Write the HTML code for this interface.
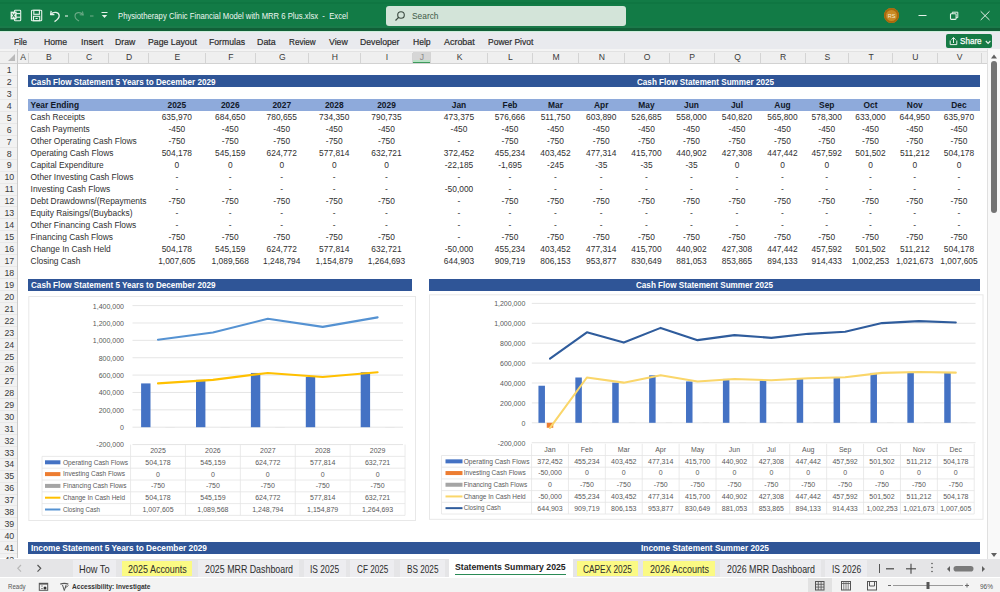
<!DOCTYPE html><html><head><meta charset="utf-8"><style>
html,body{margin:0;padding:0;width:1000px;height:592px;overflow:hidden;background:#fff;position:relative;font-family:"Liberation Sans",sans-serif;}
</style></head><body>
<div style="position:absolute;left:0.00px;top:0.00px;width:1000.00px;height:31.00px;background:#127b46;"></div>
<div style="position:absolute;top:11.52px;font-size:8.6px;line-height:1;white-space:nowrap;color:#eef7f1;font-weight:normal;left:117.50px;transform:scaleX(0.8951);transform-origin:0 0;">Physiotherapy Clinic Financial Model with MRR 6 Plus.xlsx&nbsp; -&nbsp; Excel</div>
<div style="position:absolute;left:0.00px;top:25.50px;width:1000.00px;height:0.80px;background:#0d7742;"></div>
<div style="position:absolute;left:0.00px;top:26.30px;width:1000.00px;height:2.00px;background:#1a7a4a;"></div>
<div style="position:absolute;left:0.00px;top:28.30px;width:1000.00px;height:2.70px;background:#115f37;"></div>
<div style="position:absolute;left:0.00px;top:2.00px;width:1000.00px;height:2.00px;background:#0f7642;"></div>
<div style="position:absolute;left:386.00px;top:5.50px;width:239.50px;height:20.30px;background:#d3e4d9;border-radius:3px;"></div>
<svg style="position:absolute;left:394px;top:10px" width="12" height="12" viewBox="0 0 12 12"><circle cx="7" cy="5" r="3.3" fill="none" stroke="#3b4a40" stroke-width="1.1"/><line x1="4.6" y1="7.4" x2="1.5" y2="10.5" stroke="#3b4a40" stroke-width="1.2"/></svg>
<div style="position:absolute;top:10.57px;font-size:9.6px;line-height:1;white-space:nowrap;color:#3e5a48;font-weight:normal;left:412.30px;transform:scaleX(0.8715);transform-origin:0 0;">Search</div>
<svg style="position:absolute;left:0;top:0" width="115" height="31" viewBox="0 0 115 31">
<g fill="none" stroke="#e6f2ea" stroke-width="1.1">
<rect x="14.5" y="10.3" width="6.2" height="10.4" rx="0.8"/>
<line x1="15" y1="13.6" x2="20.5" y2="13.6"/><line x1="15" y1="17.2" x2="20.5" y2="17.2"/>
<rect x="31.5" y="10.3" width="10.2" height="10.4" rx="0.8"/>
<rect x="33.8" y="10.3" width="5.6" height="4"/>
<rect x="33.5" y="16.3" width="6.2" height="4.4"/>
<line x1="35.5" y1="18.5" x2="37.7" y2="18.5"/>
<path d="M51.2 10.8 L50.6 14.6 L54.4 14.6" stroke-linejoin="round" stroke-width="1.3"/>
<path d="M50.9 14.3 C53.5 11.2 59.2 11.8 59.2 15.8 C59.2 18.2 57.5 19.8 54.5 21.6" stroke-width="1.3"/>
<line x1="65" y1="16" x2="68" y2="16"/>
</g>
<g fill="none" stroke="#6aa985" stroke-width="1.1">
<path d="M82.5 11.5 L83.2 15 L79.7 14.8"/>
<path d="M83 14.8 C80.5 11.5 75 12 75 16 C75 18.5 77 20 79 21"/>
<line x1="90" y1="16" x2="93.5" y2="16"/>
</g>
<line x1="101.5" y1="12.5" x2="107.5" y2="12.5" stroke="#e6f2ea" stroke-width="1"/>
<path d="M101.8 15 L107.2 15 L104.5 18 Z" fill="#e6f2ea"/>
<rect x="10.6" y="11.6" width="6" height="7.8" fill="#e6f2ea"/>
<path d="M12.3 13.4 L14.9 17.6 M14.9 13.4 L12.3 17.6" stroke="#1a7a44" stroke-width="1"/>
</svg>
<div style="position:absolute;left:884px;top:8.3px;width:15px;height:15px;border-radius:50%;background:#c98a24;box-shadow:inset 0 0 0 2px #a8680c;"></div>
<div style="position:absolute;top:13.54px;font-size:5.5px;line-height:1;white-space:nowrap;color:#f7ecd0;font-weight:normal;left:741.50px;width:300px;text-align:center;">RS</div>
<svg style="position:absolute;left:900px;top:0" width="100" height="31" viewBox="900 0 100 31">
<line x1="918.5" y1="15.5" x2="926.5" y2="15.5" stroke="#e6f2ea" stroke-width="1"/>
<rect x="950.5" y="13.8" width="5.6" height="5.6" rx="0.8" fill="none" stroke="#e6f2ea" stroke-width="1.1"/>
<path d="M952.3 13.8 L952.3 12.2 L957.8 12.2 L957.8 17.6 L956.1 17.6" fill="none" stroke="#e6f2ea" stroke-width="1"/>
<path d="M980.7 11.3 L989.5 20 M989.5 11.3 L980.7 20" stroke="#e6f2ea" stroke-width="1"/>
</svg>
<div style="position:absolute;left:0.00px;top:31.00px;width:1000.00px;height:17.60px;background:#e9eaee;"></div>
<div style="position:absolute;left:0.00px;top:31.00px;width:1000.00px;height:1.20px;background:#cdeedb;"></div>
<div style="position:absolute;top:37.27px;font-size:9.6px;line-height:1;white-space:nowrap;color:#2b2b2b;font-weight:normal;-webkit-text-stroke:0.2px #2b2b2b;left:14.00px;transform:scaleX(0.8404);transform-origin:0 0;">File</div>
<div style="position:absolute;top:37.27px;font-size:9.6px;line-height:1;white-space:nowrap;color:#2b2b2b;font-weight:normal;-webkit-text-stroke:0.2px #2b2b2b;left:43.80px;transform:scaleX(0.9065);transform-origin:0 0;">Home</div>
<div style="position:absolute;top:37.27px;font-size:9.6px;line-height:1;white-space:nowrap;color:#2b2b2b;font-weight:normal;-webkit-text-stroke:0.2px #2b2b2b;left:80.50px;transform:scaleX(0.9250);transform-origin:0 0;">Insert</div>
<div style="position:absolute;top:37.27px;font-size:9.6px;line-height:1;white-space:nowrap;color:#2b2b2b;font-weight:normal;-webkit-text-stroke:0.2px #2b2b2b;left:114.70px;transform:scaleX(0.9066);transform-origin:0 0;">Draw</div>
<div style="position:absolute;top:37.27px;font-size:9.6px;line-height:1;white-space:nowrap;color:#2b2b2b;font-weight:normal;-webkit-text-stroke:0.2px #2b2b2b;left:147.70px;transform:scaleX(0.9092);transform-origin:0 0;">Page Layout</div>
<div style="position:absolute;top:37.27px;font-size:9.6px;line-height:1;white-space:nowrap;color:#2b2b2b;font-weight:normal;-webkit-text-stroke:0.2px #2b2b2b;left:209.00px;transform:scaleX(0.9004);transform-origin:0 0;">Formulas</div>
<div style="position:absolute;top:37.27px;font-size:9.6px;line-height:1;white-space:nowrap;color:#2b2b2b;font-weight:normal;-webkit-text-stroke:0.2px #2b2b2b;left:257.00px;transform:scaleX(0.9227);transform-origin:0 0;">Data</div>
<div style="position:absolute;top:37.27px;font-size:9.6px;line-height:1;white-space:nowrap;color:#2b2b2b;font-weight:normal;-webkit-text-stroke:0.2px #2b2b2b;left:289.00px;transform:scaleX(0.8485);transform-origin:0 0;">Review</div>
<div style="position:absolute;top:37.27px;font-size:9.6px;line-height:1;white-space:nowrap;color:#2b2b2b;font-weight:normal;-webkit-text-stroke:0.2px #2b2b2b;left:328.80px;transform:scaleX(0.9115);transform-origin:0 0;">View</div>
<div style="position:absolute;top:37.27px;font-size:9.6px;line-height:1;white-space:nowrap;color:#2b2b2b;font-weight:normal;-webkit-text-stroke:0.2px #2b2b2b;left:360.20px;transform:scaleX(0.9032);transform-origin:0 0;">Developer</div>
<div style="position:absolute;top:37.27px;font-size:9.6px;line-height:1;white-space:nowrap;color:#2b2b2b;font-weight:normal;-webkit-text-stroke:0.2px #2b2b2b;left:412.90px;transform:scaleX(0.8918);transform-origin:0 0;">Help</div>
<div style="position:absolute;top:37.27px;font-size:9.6px;line-height:1;white-space:nowrap;color:#2b2b2b;font-weight:normal;-webkit-text-stroke:0.2px #2b2b2b;left:443.70px;transform:scaleX(0.9311);transform-origin:0 0;">Acrobat</div>
<div style="position:absolute;top:37.27px;font-size:9.6px;line-height:1;white-space:nowrap;color:#2b2b2b;font-weight:normal;-webkit-text-stroke:0.2px #2b2b2b;left:488.00px;transform:scaleX(0.8850);transform-origin:0 0;">Power Pivot</div>
<div style="position:absolute;left:946.30px;top:33.60px;width:45.90px;height:14.70px;background:#157a45;border-radius:2px;"></div>
<svg style="position:absolute;left:946px;top:33px" width="47" height="16" viewBox="946 33 47 16">
<path d="M950.2 40.5 L950.2 44.6 L956.8 44.6 L956.8 40.5" fill="none" stroke="#e6f2ea" stroke-width="1"/>
<path d="M953.5 43 L953.5 37.6 M951.4 39.7 L953.5 37.6 L955.6 39.7" fill="none" stroke="#e6f2ea" stroke-width="1"/>
<path d="M985.8 41 L988.1 43.3 L990.4 41" fill="none" stroke="#e6f2ea" stroke-width="1.2"/>
</svg>
<div style="position:absolute;top:37.15px;font-size:8.8px;line-height:1;white-space:nowrap;color:#ffffff;font-weight:normal;-webkit-text-stroke:0.25px #ffffff;left:960.40px;transform:scaleX(0.9198);transform-origin:0 0;">Share</div>
<div style="position:absolute;left:0.00px;top:48.60px;width:1000.00px;height:15.20px;background:#efefef;"></div>
<div style="position:absolute;left:0.00px;top:48.60px;width:987.30px;height:2.90px;background:#f4f4f4;"></div>
<div style="position:absolute;left:0.00px;top:51.30px;width:987.30px;height:0.60px;background:#e2e2e2;"></div>
<div style="position:absolute;left:0.00px;top:63.00px;width:987.30px;height:0.80px;background:#d2d2d2;"></div>
<svg style="position:absolute;left:7px;top:53px" width="9" height="9"><path d="M8 1 L8 8 L1 8 Z" fill="#b9b9b9"/></svg>
<div style="position:absolute;left:16.60px;top:49.00px;width:0.80px;height:509.00px;background:#c9c9c9;"></div>
<div style="position:absolute;left:412.50px;top:51.90px;width:18.00px;height:11.10px;background:#d6d6d6;"></div>
<div style="position:absolute;left:412.50px;top:60.00px;width:18.00px;height:1.60px;background:#b9e2c6;"></div>
<div style="position:absolute;left:412.50px;top:61.60px;width:18.00px;height:1.70px;background:#3d9a5c;"></div>
<div style="position:absolute;left:28.00px;top:52.50px;width:0.80px;height:10.50px;background:#d4d4d4;"></div>
<div style="position:absolute;top:53.02px;font-size:8.6px;line-height:1;white-space:nowrap;color:#3a3a3a;font-weight:normal;left:-126.80px;width:300px;text-align:center;">A</div>
<div style="position:absolute;left:68.10px;top:52.50px;width:0.80px;height:10.50px;background:#d4d4d4;"></div>
<div style="position:absolute;top:53.02px;font-size:8.6px;line-height:1;white-space:nowrap;color:#3a3a3a;font-weight:normal;left:-101.05px;width:300px;text-align:center;">B</div>
<div style="position:absolute;left:108.10px;top:52.50px;width:0.80px;height:10.50px;background:#d4d4d4;"></div>
<div style="position:absolute;top:53.02px;font-size:8.6px;line-height:1;white-space:nowrap;color:#3a3a3a;font-weight:normal;left:-61.00px;width:300px;text-align:center;">C</div>
<div style="position:absolute;left:148.30px;top:52.50px;width:0.80px;height:10.50px;background:#d4d4d4;"></div>
<div style="position:absolute;top:53.02px;font-size:8.6px;line-height:1;white-space:nowrap;color:#3a3a3a;font-weight:normal;left:-20.90px;width:300px;text-align:center;">D</div>
<div style="position:absolute;left:204.60px;top:52.50px;width:0.80px;height:10.50px;background:#d4d4d4;"></div>
<div style="position:absolute;top:53.02px;font-size:8.6px;line-height:1;white-space:nowrap;color:#3a3a3a;font-weight:normal;left:27.35px;width:300px;text-align:center;">E</div>
<div style="position:absolute;left:255.10px;top:52.50px;width:0.80px;height:10.50px;background:#d4d4d4;"></div>
<div style="position:absolute;top:53.02px;font-size:8.6px;line-height:1;white-space:nowrap;color:#3a3a3a;font-weight:normal;left:80.75px;width:300px;text-align:center;">F</div>
<div style="position:absolute;left:307.60px;top:52.50px;width:0.80px;height:10.50px;background:#d4d4d4;"></div>
<div style="position:absolute;top:53.02px;font-size:8.6px;line-height:1;white-space:nowrap;color:#3a3a3a;font-weight:normal;left:132.25px;width:300px;text-align:center;">G</div>
<div style="position:absolute;left:360.10px;top:52.50px;width:0.80px;height:10.50px;background:#d4d4d4;"></div>
<div style="position:absolute;top:53.02px;font-size:8.6px;line-height:1;white-space:nowrap;color:#3a3a3a;font-weight:normal;left:184.75px;width:300px;text-align:center;">H</div>
<div style="position:absolute;left:412.10px;top:52.50px;width:0.80px;height:10.50px;background:#d4d4d4;"></div>
<div style="position:absolute;top:53.02px;font-size:8.6px;line-height:1;white-space:nowrap;color:#3a3a3a;font-weight:normal;left:237.00px;width:300px;text-align:center;">I</div>
<div style="position:absolute;left:430.10px;top:52.50px;width:0.80px;height:10.50px;background:#d4d4d4;"></div>
<div style="position:absolute;top:53.02px;font-size:8.6px;line-height:1;white-space:nowrap;color:#8a8a8a;font-weight:normal;left:272.00px;width:300px;text-align:center;">J</div>
<div style="position:absolute;left:487.10px;top:52.50px;width:0.80px;height:10.50px;background:#d4d4d4;"></div>
<div style="position:absolute;top:53.02px;font-size:8.6px;line-height:1;white-space:nowrap;color:#3a3a3a;font-weight:normal;left:309.50px;width:300px;text-align:center;">K</div>
<div style="position:absolute;left:532.10px;top:52.50px;width:0.80px;height:10.50px;background:#d4d4d4;"></div>
<div style="position:absolute;top:53.02px;font-size:8.6px;line-height:1;white-space:nowrap;color:#3a3a3a;font-weight:normal;left:360.50px;width:300px;text-align:center;">L</div>
<div style="position:absolute;left:578.10px;top:52.50px;width:0.80px;height:10.50px;background:#d4d4d4;"></div>
<div style="position:absolute;top:53.02px;font-size:8.6px;line-height:1;white-space:nowrap;color:#3a3a3a;font-weight:normal;left:406.00px;width:300px;text-align:center;">M</div>
<div style="position:absolute;left:623.60px;top:52.50px;width:0.80px;height:10.50px;background:#d4d4d4;"></div>
<div style="position:absolute;top:53.02px;font-size:8.6px;line-height:1;white-space:nowrap;color:#3a3a3a;font-weight:normal;left:451.75px;width:300px;text-align:center;">N</div>
<div style="position:absolute;left:668.60px;top:52.50px;width:0.80px;height:10.50px;background:#d4d4d4;"></div>
<div style="position:absolute;top:53.02px;font-size:8.6px;line-height:1;white-space:nowrap;color:#3a3a3a;font-weight:normal;left:497.00px;width:300px;text-align:center;">O</div>
<div style="position:absolute;left:713.60px;top:52.50px;width:0.80px;height:10.50px;background:#d4d4d4;"></div>
<div style="position:absolute;top:53.02px;font-size:8.6px;line-height:1;white-space:nowrap;color:#3a3a3a;font-weight:normal;left:542.00px;width:300px;text-align:center;">P</div>
<div style="position:absolute;left:759.60px;top:52.50px;width:0.80px;height:10.50px;background:#d4d4d4;"></div>
<div style="position:absolute;top:53.02px;font-size:8.6px;line-height:1;white-space:nowrap;color:#3a3a3a;font-weight:normal;left:587.50px;width:300px;text-align:center;">Q</div>
<div style="position:absolute;left:804.60px;top:52.50px;width:0.80px;height:10.50px;background:#d4d4d4;"></div>
<div style="position:absolute;top:53.02px;font-size:8.6px;line-height:1;white-space:nowrap;color:#3a3a3a;font-weight:normal;left:633.00px;width:300px;text-align:center;">R</div>
<div style="position:absolute;left:848.10px;top:52.50px;width:0.80px;height:10.50px;background:#d4d4d4;"></div>
<div style="position:absolute;top:53.02px;font-size:8.6px;line-height:1;white-space:nowrap;color:#3a3a3a;font-weight:normal;left:677.25px;width:300px;text-align:center;">S</div>
<div style="position:absolute;left:892.10px;top:52.50px;width:0.80px;height:10.50px;background:#d4d4d4;"></div>
<div style="position:absolute;top:53.02px;font-size:8.6px;line-height:1;white-space:nowrap;color:#3a3a3a;font-weight:normal;left:721.00px;width:300px;text-align:center;">T</div>
<div style="position:absolute;left:936.60px;top:52.50px;width:0.80px;height:10.50px;background:#d4d4d4;"></div>
<div style="position:absolute;top:53.02px;font-size:8.6px;line-height:1;white-space:nowrap;color:#3a3a3a;font-weight:normal;left:765.25px;width:300px;text-align:center;">U</div>
<div style="position:absolute;left:980.60px;top:52.50px;width:0.80px;height:10.50px;background:#d4d4d4;"></div>
<div style="position:absolute;top:53.02px;font-size:8.6px;line-height:1;white-space:nowrap;color:#3a3a3a;font-weight:normal;left:809.50px;width:300px;text-align:center;">V</div>
<div style="position:absolute;left:0.00px;top:63.80px;width:17.00px;height:494.20px;background:#f2f2f2;"></div>
<div style="position:absolute;left:0.00px;top:74.91px;width:17.00px;height:0.80px;background:#e8e8e8;"></div>
<div style="position:absolute;top:65.80px;font-size:8.8px;line-height:1;white-space:nowrap;color:#3a3a3a;font-weight:normal;left:-140.70px;width:300px;text-align:center;">1</div>
<div style="position:absolute;left:0.00px;top:86.87px;width:17.00px;height:0.80px;background:#e8e8e8;"></div>
<div style="position:absolute;top:77.76px;font-size:8.8px;line-height:1;white-space:nowrap;color:#3a3a3a;font-weight:normal;left:-140.70px;width:300px;text-align:center;">2</div>
<div style="position:absolute;left:0.00px;top:98.83px;width:17.00px;height:0.80px;background:#e8e8e8;"></div>
<div style="position:absolute;top:89.72px;font-size:8.8px;line-height:1;white-space:nowrap;color:#3a3a3a;font-weight:normal;left:-140.70px;width:300px;text-align:center;">3</div>
<div style="position:absolute;left:0.00px;top:110.79px;width:17.00px;height:0.80px;background:#e8e8e8;"></div>
<div style="position:absolute;top:101.68px;font-size:8.8px;line-height:1;white-space:nowrap;color:#3a3a3a;font-weight:normal;left:-140.70px;width:300px;text-align:center;">4</div>
<div style="position:absolute;left:0.00px;top:122.75px;width:17.00px;height:0.80px;background:#e8e8e8;"></div>
<div style="position:absolute;top:113.64px;font-size:8.8px;line-height:1;white-space:nowrap;color:#3a3a3a;font-weight:normal;left:-140.70px;width:300px;text-align:center;">5</div>
<div style="position:absolute;left:0.00px;top:134.71px;width:17.00px;height:0.80px;background:#e8e8e8;"></div>
<div style="position:absolute;top:125.60px;font-size:8.8px;line-height:1;white-space:nowrap;color:#3a3a3a;font-weight:normal;left:-140.70px;width:300px;text-align:center;">6</div>
<div style="position:absolute;left:0.00px;top:146.67px;width:17.00px;height:0.80px;background:#e8e8e8;"></div>
<div style="position:absolute;top:137.56px;font-size:8.8px;line-height:1;white-space:nowrap;color:#3a3a3a;font-weight:normal;left:-140.70px;width:300px;text-align:center;">7</div>
<div style="position:absolute;left:0.00px;top:158.63px;width:17.00px;height:0.80px;background:#e8e8e8;"></div>
<div style="position:absolute;top:149.52px;font-size:8.8px;line-height:1;white-space:nowrap;color:#3a3a3a;font-weight:normal;left:-140.70px;width:300px;text-align:center;">8</div>
<div style="position:absolute;left:0.00px;top:170.59px;width:17.00px;height:0.80px;background:#e8e8e8;"></div>
<div style="position:absolute;top:161.48px;font-size:8.8px;line-height:1;white-space:nowrap;color:#3a3a3a;font-weight:normal;left:-140.70px;width:300px;text-align:center;">9</div>
<div style="position:absolute;left:0.00px;top:182.55px;width:17.00px;height:0.80px;background:#e8e8e8;"></div>
<div style="position:absolute;top:173.44px;font-size:8.8px;line-height:1;white-space:nowrap;color:#3a3a3a;font-weight:normal;left:-140.70px;width:300px;text-align:center;">10</div>
<div style="position:absolute;left:0.00px;top:194.51px;width:17.00px;height:0.80px;background:#e8e8e8;"></div>
<div style="position:absolute;top:185.40px;font-size:8.8px;line-height:1;white-space:nowrap;color:#3a3a3a;font-weight:normal;left:-140.70px;width:300px;text-align:center;">11</div>
<div style="position:absolute;left:0.00px;top:206.47px;width:17.00px;height:0.80px;background:#e8e8e8;"></div>
<div style="position:absolute;top:197.36px;font-size:8.8px;line-height:1;white-space:nowrap;color:#3a3a3a;font-weight:normal;left:-140.70px;width:300px;text-align:center;">12</div>
<div style="position:absolute;left:0.00px;top:218.43px;width:17.00px;height:0.80px;background:#e8e8e8;"></div>
<div style="position:absolute;top:209.32px;font-size:8.8px;line-height:1;white-space:nowrap;color:#3a3a3a;font-weight:normal;left:-140.70px;width:300px;text-align:center;">13</div>
<div style="position:absolute;left:0.00px;top:230.39px;width:17.00px;height:0.80px;background:#e8e8e8;"></div>
<div style="position:absolute;top:221.28px;font-size:8.8px;line-height:1;white-space:nowrap;color:#3a3a3a;font-weight:normal;left:-140.70px;width:300px;text-align:center;">14</div>
<div style="position:absolute;left:0.00px;top:242.35px;width:17.00px;height:0.80px;background:#e8e8e8;"></div>
<div style="position:absolute;top:233.24px;font-size:8.8px;line-height:1;white-space:nowrap;color:#3a3a3a;font-weight:normal;left:-140.70px;width:300px;text-align:center;">15</div>
<div style="position:absolute;left:0.00px;top:254.31px;width:17.00px;height:0.80px;background:#e8e8e8;"></div>
<div style="position:absolute;top:245.20px;font-size:8.8px;line-height:1;white-space:nowrap;color:#3a3a3a;font-weight:normal;left:-140.70px;width:300px;text-align:center;">16</div>
<div style="position:absolute;left:0.00px;top:266.27px;width:17.00px;height:0.80px;background:#e8e8e8;"></div>
<div style="position:absolute;top:257.16px;font-size:8.8px;line-height:1;white-space:nowrap;color:#3a3a3a;font-weight:normal;left:-140.70px;width:300px;text-align:center;">17</div>
<div style="position:absolute;left:0.00px;top:278.23px;width:17.00px;height:0.80px;background:#e8e8e8;"></div>
<div style="position:absolute;top:269.12px;font-size:8.8px;line-height:1;white-space:nowrap;color:#3a3a3a;font-weight:normal;left:-140.70px;width:300px;text-align:center;">18</div>
<div style="position:absolute;left:0.00px;top:290.19px;width:17.00px;height:0.80px;background:#e8e8e8;"></div>
<div style="position:absolute;top:281.08px;font-size:8.8px;line-height:1;white-space:nowrap;color:#3a3a3a;font-weight:normal;left:-140.70px;width:300px;text-align:center;">19</div>
<div style="position:absolute;left:0.00px;top:302.15px;width:17.00px;height:0.80px;background:#e8e8e8;"></div>
<div style="position:absolute;top:293.04px;font-size:8.8px;line-height:1;white-space:nowrap;color:#3a3a3a;font-weight:normal;left:-140.70px;width:300px;text-align:center;">20</div>
<div style="position:absolute;left:0.00px;top:314.11px;width:17.00px;height:0.80px;background:#e8e8e8;"></div>
<div style="position:absolute;top:305.00px;font-size:8.8px;line-height:1;white-space:nowrap;color:#3a3a3a;font-weight:normal;left:-140.70px;width:300px;text-align:center;">21</div>
<div style="position:absolute;left:0.00px;top:326.07px;width:17.00px;height:0.80px;background:#e8e8e8;"></div>
<div style="position:absolute;top:316.96px;font-size:8.8px;line-height:1;white-space:nowrap;color:#3a3a3a;font-weight:normal;left:-140.70px;width:300px;text-align:center;">22</div>
<div style="position:absolute;left:0.00px;top:338.03px;width:17.00px;height:0.80px;background:#e8e8e8;"></div>
<div style="position:absolute;top:328.92px;font-size:8.8px;line-height:1;white-space:nowrap;color:#3a3a3a;font-weight:normal;left:-140.70px;width:300px;text-align:center;">23</div>
<div style="position:absolute;left:0.00px;top:349.99px;width:17.00px;height:0.80px;background:#e8e8e8;"></div>
<div style="position:absolute;top:340.88px;font-size:8.8px;line-height:1;white-space:nowrap;color:#3a3a3a;font-weight:normal;left:-140.70px;width:300px;text-align:center;">24</div>
<div style="position:absolute;left:0.00px;top:361.95px;width:17.00px;height:0.80px;background:#e8e8e8;"></div>
<div style="position:absolute;top:352.84px;font-size:8.8px;line-height:1;white-space:nowrap;color:#3a3a3a;font-weight:normal;left:-140.70px;width:300px;text-align:center;">25</div>
<div style="position:absolute;left:0.00px;top:373.91px;width:17.00px;height:0.80px;background:#e8e8e8;"></div>
<div style="position:absolute;top:364.80px;font-size:8.8px;line-height:1;white-space:nowrap;color:#3a3a3a;font-weight:normal;left:-140.70px;width:300px;text-align:center;">26</div>
<div style="position:absolute;left:0.00px;top:385.87px;width:17.00px;height:0.80px;background:#e8e8e8;"></div>
<div style="position:absolute;top:376.76px;font-size:8.8px;line-height:1;white-space:nowrap;color:#3a3a3a;font-weight:normal;left:-140.70px;width:300px;text-align:center;">27</div>
<div style="position:absolute;left:0.00px;top:397.83px;width:17.00px;height:0.80px;background:#e8e8e8;"></div>
<div style="position:absolute;top:388.72px;font-size:8.8px;line-height:1;white-space:nowrap;color:#3a3a3a;font-weight:normal;left:-140.70px;width:300px;text-align:center;">28</div>
<div style="position:absolute;left:0.00px;top:409.79px;width:17.00px;height:0.80px;background:#e8e8e8;"></div>
<div style="position:absolute;top:400.68px;font-size:8.8px;line-height:1;white-space:nowrap;color:#3a3a3a;font-weight:normal;left:-140.70px;width:300px;text-align:center;">29</div>
<div style="position:absolute;left:0.00px;top:421.75px;width:17.00px;height:0.80px;background:#e8e8e8;"></div>
<div style="position:absolute;top:412.64px;font-size:8.8px;line-height:1;white-space:nowrap;color:#3a3a3a;font-weight:normal;left:-140.70px;width:300px;text-align:center;">30</div>
<div style="position:absolute;left:0.00px;top:433.71px;width:17.00px;height:0.80px;background:#e8e8e8;"></div>
<div style="position:absolute;top:424.60px;font-size:8.8px;line-height:1;white-space:nowrap;color:#3a3a3a;font-weight:normal;left:-140.70px;width:300px;text-align:center;">31</div>
<div style="position:absolute;left:0.00px;top:445.67px;width:17.00px;height:0.80px;background:#e8e8e8;"></div>
<div style="position:absolute;top:436.56px;font-size:8.8px;line-height:1;white-space:nowrap;color:#3a3a3a;font-weight:normal;left:-140.70px;width:300px;text-align:center;">32</div>
<div style="position:absolute;left:0.00px;top:457.63px;width:17.00px;height:0.80px;background:#e8e8e8;"></div>
<div style="position:absolute;top:448.52px;font-size:8.8px;line-height:1;white-space:nowrap;color:#3a3a3a;font-weight:normal;left:-140.70px;width:300px;text-align:center;">33</div>
<div style="position:absolute;left:0.00px;top:469.59px;width:17.00px;height:0.80px;background:#e8e8e8;"></div>
<div style="position:absolute;top:460.48px;font-size:8.8px;line-height:1;white-space:nowrap;color:#3a3a3a;font-weight:normal;left:-140.70px;width:300px;text-align:center;">34</div>
<div style="position:absolute;left:0.00px;top:481.55px;width:17.00px;height:0.80px;background:#e8e8e8;"></div>
<div style="position:absolute;top:472.44px;font-size:8.8px;line-height:1;white-space:nowrap;color:#3a3a3a;font-weight:normal;left:-140.70px;width:300px;text-align:center;">35</div>
<div style="position:absolute;left:0.00px;top:493.51px;width:17.00px;height:0.80px;background:#e8e8e8;"></div>
<div style="position:absolute;top:484.40px;font-size:8.8px;line-height:1;white-space:nowrap;color:#3a3a3a;font-weight:normal;left:-140.70px;width:300px;text-align:center;">36</div>
<div style="position:absolute;left:0.00px;top:505.47px;width:17.00px;height:0.80px;background:#e8e8e8;"></div>
<div style="position:absolute;top:496.36px;font-size:8.8px;line-height:1;white-space:nowrap;color:#3a3a3a;font-weight:normal;left:-140.70px;width:300px;text-align:center;">37</div>
<div style="position:absolute;left:0.00px;top:517.43px;width:17.00px;height:0.80px;background:#e8e8e8;"></div>
<div style="position:absolute;top:508.32px;font-size:8.8px;line-height:1;white-space:nowrap;color:#3a3a3a;font-weight:normal;left:-140.70px;width:300px;text-align:center;">38</div>
<div style="position:absolute;left:0.00px;top:529.39px;width:17.00px;height:0.80px;background:#e8e8e8;"></div>
<div style="position:absolute;top:520.28px;font-size:8.8px;line-height:1;white-space:nowrap;color:#3a3a3a;font-weight:normal;left:-140.70px;width:300px;text-align:center;">39</div>
<div style="position:absolute;left:0.00px;top:541.35px;width:17.00px;height:0.80px;background:#e8e8e8;"></div>
<div style="position:absolute;top:532.24px;font-size:8.8px;line-height:1;white-space:nowrap;color:#3a3a3a;font-weight:normal;left:-140.70px;width:300px;text-align:center;">40</div>
<div style="position:absolute;left:0.00px;top:553.31px;width:17.00px;height:0.80px;background:#e8e8e8;"></div>
<div style="position:absolute;top:544.20px;font-size:8.8px;line-height:1;white-space:nowrap;color:#3a3a3a;font-weight:normal;left:-140.70px;width:300px;text-align:center;">41</div>
<div style="position:absolute;left:0.00px;top:565.27px;width:17.00px;height:0.80px;background:#e8e8e8;"></div>
<div style="position:absolute;top:556.16px;font-size:8.8px;line-height:1;white-space:nowrap;color:#3a3a3a;font-weight:normal;left:-140.70px;width:300px;text-align:center;">42</div>
<div style="position:absolute;left:28.40px;top:75.31px;width:951.60px;height:11.96px;background:#2f5597;"></div>
<div style="position:absolute;top:77.55px;font-size:8.7px;line-height:1;white-space:nowrap;color:#ffffff;font-weight:bold;left:30.60px;transform:scaleX(0.9350);transform-origin:0 0;">Cash Flow Statement 5 Years to December 2029</div>
<div style="position:absolute;top:77.55px;font-size:8.7px;line-height:1;white-space:nowrap;color:#ffffff;font-weight:bold;left:637.25px;transform:scaleX(0.9334);transform-origin:0 0;">Cash Flow Statement Summer 2025</div>
<div style="position:absolute;left:28.40px;top:99.23px;width:951.60px;height:11.96px;background:#8eaadb;"></div>
<div style="position:absolute;top:101.02px;font-size:8.4px;line-height:1;white-space:nowrap;color:#111827;font-weight:bold;left:30.60px;">Year Ending</div>
<div style="position:absolute;top:101.02px;font-size:8.4px;line-height:1;white-space:nowrap;color:#111827;font-weight:bold;left:26.85px;width:300px;text-align:center;">2025</div>
<div style="position:absolute;top:101.02px;font-size:8.4px;line-height:1;white-space:nowrap;color:#111827;font-weight:bold;left:80.25px;width:300px;text-align:center;">2026</div>
<div style="position:absolute;top:101.02px;font-size:8.4px;line-height:1;white-space:nowrap;color:#111827;font-weight:bold;left:131.75px;width:300px;text-align:center;">2027</div>
<div style="position:absolute;top:101.02px;font-size:8.4px;line-height:1;white-space:nowrap;color:#111827;font-weight:bold;left:184.25px;width:300px;text-align:center;">2028</div>
<div style="position:absolute;top:101.02px;font-size:8.4px;line-height:1;white-space:nowrap;color:#111827;font-weight:bold;left:236.50px;width:300px;text-align:center;">2029</div>
<div style="position:absolute;top:101.02px;font-size:8.4px;line-height:1;white-space:nowrap;color:#111827;font-weight:bold;left:309.00px;width:300px;text-align:center;">Jan</div>
<div style="position:absolute;top:101.02px;font-size:8.4px;line-height:1;white-space:nowrap;color:#111827;font-weight:bold;left:360.00px;width:300px;text-align:center;">Feb</div>
<div style="position:absolute;top:101.02px;font-size:8.4px;line-height:1;white-space:nowrap;color:#111827;font-weight:bold;left:405.50px;width:300px;text-align:center;">Mar</div>
<div style="position:absolute;top:101.02px;font-size:8.4px;line-height:1;white-space:nowrap;color:#111827;font-weight:bold;left:451.25px;width:300px;text-align:center;">Apr</div>
<div style="position:absolute;top:101.02px;font-size:8.4px;line-height:1;white-space:nowrap;color:#111827;font-weight:bold;left:496.50px;width:300px;text-align:center;">May</div>
<div style="position:absolute;top:101.02px;font-size:8.4px;line-height:1;white-space:nowrap;color:#111827;font-weight:bold;left:541.50px;width:300px;text-align:center;">Jun</div>
<div style="position:absolute;top:101.02px;font-size:8.4px;line-height:1;white-space:nowrap;color:#111827;font-weight:bold;left:587.00px;width:300px;text-align:center;">Jul</div>
<div style="position:absolute;top:101.02px;font-size:8.4px;line-height:1;white-space:nowrap;color:#111827;font-weight:bold;left:632.50px;width:300px;text-align:center;">Aug</div>
<div style="position:absolute;top:101.02px;font-size:8.4px;line-height:1;white-space:nowrap;color:#111827;font-weight:bold;left:676.75px;width:300px;text-align:center;">Sep</div>
<div style="position:absolute;top:101.02px;font-size:8.4px;line-height:1;white-space:nowrap;color:#111827;font-weight:bold;left:720.50px;width:300px;text-align:center;">Oct</div>
<div style="position:absolute;top:101.02px;font-size:8.4px;line-height:1;white-space:nowrap;color:#111827;font-weight:bold;left:764.75px;width:300px;text-align:center;">Nov</div>
<div style="position:absolute;top:101.02px;font-size:8.4px;line-height:1;white-space:nowrap;color:#111827;font-weight:bold;left:809.00px;width:300px;text-align:center;">Dec</div>
<div style="position:absolute;top:112.98px;font-size:8.4px;line-height:1;white-space:nowrap;color:#303030;font-weight:normal;left:30.60px;">Cash Receipts</div>
<div style="position:absolute;top:112.98px;font-size:8.4px;line-height:1;white-space:nowrap;color:#303030;font-weight:normal;left:26.85px;width:300px;text-align:center;">635,970</div>
<div style="position:absolute;top:112.98px;font-size:8.4px;line-height:1;white-space:nowrap;color:#303030;font-weight:normal;left:80.25px;width:300px;text-align:center;">684,650</div>
<div style="position:absolute;top:112.98px;font-size:8.4px;line-height:1;white-space:nowrap;color:#303030;font-weight:normal;left:131.75px;width:300px;text-align:center;">780,655</div>
<div style="position:absolute;top:112.98px;font-size:8.4px;line-height:1;white-space:nowrap;color:#303030;font-weight:normal;left:184.25px;width:300px;text-align:center;">734,350</div>
<div style="position:absolute;top:112.98px;font-size:8.4px;line-height:1;white-space:nowrap;color:#303030;font-weight:normal;left:236.50px;width:300px;text-align:center;">790,735</div>
<div style="position:absolute;top:112.98px;font-size:8.4px;line-height:1;white-space:nowrap;color:#303030;font-weight:normal;left:309.00px;width:300px;text-align:center;">473,375</div>
<div style="position:absolute;top:112.98px;font-size:8.4px;line-height:1;white-space:nowrap;color:#303030;font-weight:normal;left:360.00px;width:300px;text-align:center;">576,666</div>
<div style="position:absolute;top:112.98px;font-size:8.4px;line-height:1;white-space:nowrap;color:#303030;font-weight:normal;left:405.50px;width:300px;text-align:center;">511,750</div>
<div style="position:absolute;top:112.98px;font-size:8.4px;line-height:1;white-space:nowrap;color:#303030;font-weight:normal;left:451.25px;width:300px;text-align:center;">603,890</div>
<div style="position:absolute;top:112.98px;font-size:8.4px;line-height:1;white-space:nowrap;color:#303030;font-weight:normal;left:496.50px;width:300px;text-align:center;">526,685</div>
<div style="position:absolute;top:112.98px;font-size:8.4px;line-height:1;white-space:nowrap;color:#303030;font-weight:normal;left:541.50px;width:300px;text-align:center;">558,000</div>
<div style="position:absolute;top:112.98px;font-size:8.4px;line-height:1;white-space:nowrap;color:#303030;font-weight:normal;left:587.00px;width:300px;text-align:center;">540,820</div>
<div style="position:absolute;top:112.98px;font-size:8.4px;line-height:1;white-space:nowrap;color:#303030;font-weight:normal;left:632.50px;width:300px;text-align:center;">565,800</div>
<div style="position:absolute;top:112.98px;font-size:8.4px;line-height:1;white-space:nowrap;color:#303030;font-weight:normal;left:676.75px;width:300px;text-align:center;">578,300</div>
<div style="position:absolute;top:112.98px;font-size:8.4px;line-height:1;white-space:nowrap;color:#303030;font-weight:normal;left:720.50px;width:300px;text-align:center;">633,000</div>
<div style="position:absolute;top:112.98px;font-size:8.4px;line-height:1;white-space:nowrap;color:#303030;font-weight:normal;left:764.75px;width:300px;text-align:center;">644,950</div>
<div style="position:absolute;top:112.98px;font-size:8.4px;line-height:1;white-space:nowrap;color:#303030;font-weight:normal;left:809.00px;width:300px;text-align:center;">635,970</div>
<div style="position:absolute;top:124.94px;font-size:8.4px;line-height:1;white-space:nowrap;color:#303030;font-weight:normal;left:30.60px;">Cash Payments</div>
<div style="position:absolute;top:124.94px;font-size:8.4px;line-height:1;white-space:nowrap;color:#303030;font-weight:normal;left:26.85px;width:300px;text-align:center;">-450</div>
<div style="position:absolute;top:124.94px;font-size:8.4px;line-height:1;white-space:nowrap;color:#303030;font-weight:normal;left:80.25px;width:300px;text-align:center;">-450</div>
<div style="position:absolute;top:124.94px;font-size:8.4px;line-height:1;white-space:nowrap;color:#303030;font-weight:normal;left:131.75px;width:300px;text-align:center;">-450</div>
<div style="position:absolute;top:124.94px;font-size:8.4px;line-height:1;white-space:nowrap;color:#303030;font-weight:normal;left:184.25px;width:300px;text-align:center;">-450</div>
<div style="position:absolute;top:124.94px;font-size:8.4px;line-height:1;white-space:nowrap;color:#303030;font-weight:normal;left:236.50px;width:300px;text-align:center;">-450</div>
<div style="position:absolute;top:124.94px;font-size:8.4px;line-height:1;white-space:nowrap;color:#303030;font-weight:normal;left:309.00px;width:300px;text-align:center;">-450</div>
<div style="position:absolute;top:124.94px;font-size:8.4px;line-height:1;white-space:nowrap;color:#303030;font-weight:normal;left:360.00px;width:300px;text-align:center;">-450</div>
<div style="position:absolute;top:124.94px;font-size:8.4px;line-height:1;white-space:nowrap;color:#303030;font-weight:normal;left:405.50px;width:300px;text-align:center;">-450</div>
<div style="position:absolute;top:124.94px;font-size:8.4px;line-height:1;white-space:nowrap;color:#303030;font-weight:normal;left:451.25px;width:300px;text-align:center;">-450</div>
<div style="position:absolute;top:124.94px;font-size:8.4px;line-height:1;white-space:nowrap;color:#303030;font-weight:normal;left:496.50px;width:300px;text-align:center;">-450</div>
<div style="position:absolute;top:124.94px;font-size:8.4px;line-height:1;white-space:nowrap;color:#303030;font-weight:normal;left:541.50px;width:300px;text-align:center;">-450</div>
<div style="position:absolute;top:124.94px;font-size:8.4px;line-height:1;white-space:nowrap;color:#303030;font-weight:normal;left:587.00px;width:300px;text-align:center;">-450</div>
<div style="position:absolute;top:124.94px;font-size:8.4px;line-height:1;white-space:nowrap;color:#303030;font-weight:normal;left:632.50px;width:300px;text-align:center;">-450</div>
<div style="position:absolute;top:124.94px;font-size:8.4px;line-height:1;white-space:nowrap;color:#303030;font-weight:normal;left:676.75px;width:300px;text-align:center;">-450</div>
<div style="position:absolute;top:124.94px;font-size:8.4px;line-height:1;white-space:nowrap;color:#303030;font-weight:normal;left:720.50px;width:300px;text-align:center;">-450</div>
<div style="position:absolute;top:124.94px;font-size:8.4px;line-height:1;white-space:nowrap;color:#303030;font-weight:normal;left:764.75px;width:300px;text-align:center;">-450</div>
<div style="position:absolute;top:124.94px;font-size:8.4px;line-height:1;white-space:nowrap;color:#303030;font-weight:normal;left:809.00px;width:300px;text-align:center;">-450</div>
<div style="position:absolute;top:136.90px;font-size:8.4px;line-height:1;white-space:nowrap;color:#303030;font-weight:normal;left:30.60px;">Other Operating Cash Flows</div>
<div style="position:absolute;top:136.90px;font-size:8.4px;line-height:1;white-space:nowrap;color:#303030;font-weight:normal;left:26.85px;width:300px;text-align:center;">-750</div>
<div style="position:absolute;top:136.90px;font-size:8.4px;line-height:1;white-space:nowrap;color:#303030;font-weight:normal;left:80.25px;width:300px;text-align:center;">-750</div>
<div style="position:absolute;top:136.90px;font-size:8.4px;line-height:1;white-space:nowrap;color:#303030;font-weight:normal;left:131.75px;width:300px;text-align:center;">-750</div>
<div style="position:absolute;top:136.90px;font-size:8.4px;line-height:1;white-space:nowrap;color:#303030;font-weight:normal;left:184.25px;width:300px;text-align:center;">-750</div>
<div style="position:absolute;top:136.90px;font-size:8.4px;line-height:1;white-space:nowrap;color:#303030;font-weight:normal;left:236.50px;width:300px;text-align:center;">-750</div>
<div style="position:absolute;top:136.90px;font-size:8.4px;line-height:1;white-space:nowrap;color:#303030;font-weight:normal;left:309.00px;width:300px;text-align:center;">-</div>
<div style="position:absolute;top:136.90px;font-size:8.4px;line-height:1;white-space:nowrap;color:#303030;font-weight:normal;left:360.00px;width:300px;text-align:center;">-750</div>
<div style="position:absolute;top:136.90px;font-size:8.4px;line-height:1;white-space:nowrap;color:#303030;font-weight:normal;left:405.50px;width:300px;text-align:center;">-750</div>
<div style="position:absolute;top:136.90px;font-size:8.4px;line-height:1;white-space:nowrap;color:#303030;font-weight:normal;left:451.25px;width:300px;text-align:center;">-750</div>
<div style="position:absolute;top:136.90px;font-size:8.4px;line-height:1;white-space:nowrap;color:#303030;font-weight:normal;left:496.50px;width:300px;text-align:center;">-750</div>
<div style="position:absolute;top:136.90px;font-size:8.4px;line-height:1;white-space:nowrap;color:#303030;font-weight:normal;left:541.50px;width:300px;text-align:center;">-750</div>
<div style="position:absolute;top:136.90px;font-size:8.4px;line-height:1;white-space:nowrap;color:#303030;font-weight:normal;left:587.00px;width:300px;text-align:center;">-750</div>
<div style="position:absolute;top:136.90px;font-size:8.4px;line-height:1;white-space:nowrap;color:#303030;font-weight:normal;left:632.50px;width:300px;text-align:center;">-750</div>
<div style="position:absolute;top:136.90px;font-size:8.4px;line-height:1;white-space:nowrap;color:#303030;font-weight:normal;left:676.75px;width:300px;text-align:center;">-750</div>
<div style="position:absolute;top:136.90px;font-size:8.4px;line-height:1;white-space:nowrap;color:#303030;font-weight:normal;left:720.50px;width:300px;text-align:center;">-750</div>
<div style="position:absolute;top:136.90px;font-size:8.4px;line-height:1;white-space:nowrap;color:#303030;font-weight:normal;left:764.75px;width:300px;text-align:center;">-750</div>
<div style="position:absolute;top:136.90px;font-size:8.4px;line-height:1;white-space:nowrap;color:#303030;font-weight:normal;left:809.00px;width:300px;text-align:center;">-750</div>
<div style="position:absolute;top:148.86px;font-size:8.4px;line-height:1;white-space:nowrap;color:#303030;font-weight:normal;left:30.60px;">Operating Cash Flows</div>
<div style="position:absolute;top:148.86px;font-size:8.4px;line-height:1;white-space:nowrap;color:#303030;font-weight:normal;left:26.85px;width:300px;text-align:center;">504,178</div>
<div style="position:absolute;top:148.86px;font-size:8.4px;line-height:1;white-space:nowrap;color:#303030;font-weight:normal;left:80.25px;width:300px;text-align:center;">545,159</div>
<div style="position:absolute;top:148.86px;font-size:8.4px;line-height:1;white-space:nowrap;color:#303030;font-weight:normal;left:131.75px;width:300px;text-align:center;">624,772</div>
<div style="position:absolute;top:148.86px;font-size:8.4px;line-height:1;white-space:nowrap;color:#303030;font-weight:normal;left:184.25px;width:300px;text-align:center;">577,814</div>
<div style="position:absolute;top:148.86px;font-size:8.4px;line-height:1;white-space:nowrap;color:#303030;font-weight:normal;left:236.50px;width:300px;text-align:center;">632,721</div>
<div style="position:absolute;top:148.86px;font-size:8.4px;line-height:1;white-space:nowrap;color:#303030;font-weight:normal;left:309.00px;width:300px;text-align:center;">372,452</div>
<div style="position:absolute;top:148.86px;font-size:8.4px;line-height:1;white-space:nowrap;color:#303030;font-weight:normal;left:360.00px;width:300px;text-align:center;">455,234</div>
<div style="position:absolute;top:148.86px;font-size:8.4px;line-height:1;white-space:nowrap;color:#303030;font-weight:normal;left:405.50px;width:300px;text-align:center;">403,452</div>
<div style="position:absolute;top:148.86px;font-size:8.4px;line-height:1;white-space:nowrap;color:#303030;font-weight:normal;left:451.25px;width:300px;text-align:center;">477,314</div>
<div style="position:absolute;top:148.86px;font-size:8.4px;line-height:1;white-space:nowrap;color:#303030;font-weight:normal;left:496.50px;width:300px;text-align:center;">415,700</div>
<div style="position:absolute;top:148.86px;font-size:8.4px;line-height:1;white-space:nowrap;color:#303030;font-weight:normal;left:541.50px;width:300px;text-align:center;">440,902</div>
<div style="position:absolute;top:148.86px;font-size:8.4px;line-height:1;white-space:nowrap;color:#303030;font-weight:normal;left:587.00px;width:300px;text-align:center;">427,308</div>
<div style="position:absolute;top:148.86px;font-size:8.4px;line-height:1;white-space:nowrap;color:#303030;font-weight:normal;left:632.50px;width:300px;text-align:center;">447,442</div>
<div style="position:absolute;top:148.86px;font-size:8.4px;line-height:1;white-space:nowrap;color:#303030;font-weight:normal;left:676.75px;width:300px;text-align:center;">457,592</div>
<div style="position:absolute;top:148.86px;font-size:8.4px;line-height:1;white-space:nowrap;color:#303030;font-weight:normal;left:720.50px;width:300px;text-align:center;">501,502</div>
<div style="position:absolute;top:148.86px;font-size:8.4px;line-height:1;white-space:nowrap;color:#303030;font-weight:normal;left:764.75px;width:300px;text-align:center;">511,212</div>
<div style="position:absolute;top:148.86px;font-size:8.4px;line-height:1;white-space:nowrap;color:#303030;font-weight:normal;left:809.00px;width:300px;text-align:center;">504,178</div>
<div style="position:absolute;top:160.82px;font-size:8.4px;line-height:1;white-space:nowrap;color:#303030;font-weight:normal;left:30.60px;">Capital Expenditure</div>
<div style="position:absolute;top:160.82px;font-size:8.4px;line-height:1;white-space:nowrap;color:#303030;font-weight:normal;left:26.85px;width:300px;text-align:center;">0</div>
<div style="position:absolute;top:160.82px;font-size:8.4px;line-height:1;white-space:nowrap;color:#303030;font-weight:normal;left:80.25px;width:300px;text-align:center;">0</div>
<div style="position:absolute;top:160.82px;font-size:8.4px;line-height:1;white-space:nowrap;color:#303030;font-weight:normal;left:131.75px;width:300px;text-align:center;">0</div>
<div style="position:absolute;top:160.82px;font-size:8.4px;line-height:1;white-space:nowrap;color:#303030;font-weight:normal;left:184.25px;width:300px;text-align:center;">0</div>
<div style="position:absolute;top:160.82px;font-size:8.4px;line-height:1;white-space:nowrap;color:#303030;font-weight:normal;left:236.50px;width:300px;text-align:center;">0</div>
<div style="position:absolute;top:160.82px;font-size:8.4px;line-height:1;white-space:nowrap;color:#303030;font-weight:normal;left:309.00px;width:300px;text-align:center;">-22,185</div>
<div style="position:absolute;top:160.82px;font-size:8.4px;line-height:1;white-space:nowrap;color:#303030;font-weight:normal;left:360.00px;width:300px;text-align:center;">-1,695</div>
<div style="position:absolute;top:160.82px;font-size:8.4px;line-height:1;white-space:nowrap;color:#303030;font-weight:normal;left:405.50px;width:300px;text-align:center;">-245</div>
<div style="position:absolute;top:160.82px;font-size:8.4px;line-height:1;white-space:nowrap;color:#303030;font-weight:normal;left:451.25px;width:300px;text-align:center;">-35</div>
<div style="position:absolute;top:160.82px;font-size:8.4px;line-height:1;white-space:nowrap;color:#303030;font-weight:normal;left:496.50px;width:300px;text-align:center;">-35</div>
<div style="position:absolute;top:160.82px;font-size:8.4px;line-height:1;white-space:nowrap;color:#303030;font-weight:normal;left:541.50px;width:300px;text-align:center;">-35</div>
<div style="position:absolute;top:160.82px;font-size:8.4px;line-height:1;white-space:nowrap;color:#303030;font-weight:normal;left:587.00px;width:300px;text-align:center;">0</div>
<div style="position:absolute;top:160.82px;font-size:8.4px;line-height:1;white-space:nowrap;color:#303030;font-weight:normal;left:632.50px;width:300px;text-align:center;">0</div>
<div style="position:absolute;top:160.82px;font-size:8.4px;line-height:1;white-space:nowrap;color:#303030;font-weight:normal;left:676.75px;width:300px;text-align:center;">0</div>
<div style="position:absolute;top:160.82px;font-size:8.4px;line-height:1;white-space:nowrap;color:#303030;font-weight:normal;left:720.50px;width:300px;text-align:center;">0</div>
<div style="position:absolute;top:160.82px;font-size:8.4px;line-height:1;white-space:nowrap;color:#303030;font-weight:normal;left:764.75px;width:300px;text-align:center;">0</div>
<div style="position:absolute;top:160.82px;font-size:8.4px;line-height:1;white-space:nowrap;color:#303030;font-weight:normal;left:809.00px;width:300px;text-align:center;">0</div>
<div style="position:absolute;top:172.78px;font-size:8.4px;line-height:1;white-space:nowrap;color:#303030;font-weight:normal;left:30.60px;">Other Investing Cash Flows</div>
<div style="position:absolute;top:172.78px;font-size:8.4px;line-height:1;white-space:nowrap;color:#303030;font-weight:normal;left:26.85px;width:300px;text-align:center;">-</div>
<div style="position:absolute;top:172.78px;font-size:8.4px;line-height:1;white-space:nowrap;color:#303030;font-weight:normal;left:80.25px;width:300px;text-align:center;">-</div>
<div style="position:absolute;top:172.78px;font-size:8.4px;line-height:1;white-space:nowrap;color:#303030;font-weight:normal;left:131.75px;width:300px;text-align:center;">-</div>
<div style="position:absolute;top:172.78px;font-size:8.4px;line-height:1;white-space:nowrap;color:#303030;font-weight:normal;left:184.25px;width:300px;text-align:center;">-</div>
<div style="position:absolute;top:172.78px;font-size:8.4px;line-height:1;white-space:nowrap;color:#303030;font-weight:normal;left:236.50px;width:300px;text-align:center;">-</div>
<div style="position:absolute;top:172.78px;font-size:8.4px;line-height:1;white-space:nowrap;color:#303030;font-weight:normal;left:309.00px;width:300px;text-align:center;">-</div>
<div style="position:absolute;top:172.78px;font-size:8.4px;line-height:1;white-space:nowrap;color:#303030;font-weight:normal;left:360.00px;width:300px;text-align:center;">-</div>
<div style="position:absolute;top:172.78px;font-size:8.4px;line-height:1;white-space:nowrap;color:#303030;font-weight:normal;left:405.50px;width:300px;text-align:center;">-</div>
<div style="position:absolute;top:172.78px;font-size:8.4px;line-height:1;white-space:nowrap;color:#303030;font-weight:normal;left:451.25px;width:300px;text-align:center;">-</div>
<div style="position:absolute;top:172.78px;font-size:8.4px;line-height:1;white-space:nowrap;color:#303030;font-weight:normal;left:496.50px;width:300px;text-align:center;">-</div>
<div style="position:absolute;top:172.78px;font-size:8.4px;line-height:1;white-space:nowrap;color:#303030;font-weight:normal;left:541.50px;width:300px;text-align:center;">-</div>
<div style="position:absolute;top:172.78px;font-size:8.4px;line-height:1;white-space:nowrap;color:#303030;font-weight:normal;left:587.00px;width:300px;text-align:center;">-</div>
<div style="position:absolute;top:172.78px;font-size:8.4px;line-height:1;white-space:nowrap;color:#303030;font-weight:normal;left:632.50px;width:300px;text-align:center;">-</div>
<div style="position:absolute;top:172.78px;font-size:8.4px;line-height:1;white-space:nowrap;color:#303030;font-weight:normal;left:676.75px;width:300px;text-align:center;">-</div>
<div style="position:absolute;top:172.78px;font-size:8.4px;line-height:1;white-space:nowrap;color:#303030;font-weight:normal;left:720.50px;width:300px;text-align:center;">-</div>
<div style="position:absolute;top:172.78px;font-size:8.4px;line-height:1;white-space:nowrap;color:#303030;font-weight:normal;left:764.75px;width:300px;text-align:center;">-</div>
<div style="position:absolute;top:172.78px;font-size:8.4px;line-height:1;white-space:nowrap;color:#303030;font-weight:normal;left:809.00px;width:300px;text-align:center;">-</div>
<div style="position:absolute;top:184.74px;font-size:8.4px;line-height:1;white-space:nowrap;color:#303030;font-weight:normal;left:30.60px;">Investing Cash Flows</div>
<div style="position:absolute;top:184.74px;font-size:8.4px;line-height:1;white-space:nowrap;color:#303030;font-weight:normal;left:26.85px;width:300px;text-align:center;">-</div>
<div style="position:absolute;top:184.74px;font-size:8.4px;line-height:1;white-space:nowrap;color:#303030;font-weight:normal;left:80.25px;width:300px;text-align:center;">-</div>
<div style="position:absolute;top:184.74px;font-size:8.4px;line-height:1;white-space:nowrap;color:#303030;font-weight:normal;left:131.75px;width:300px;text-align:center;">-</div>
<div style="position:absolute;top:184.74px;font-size:8.4px;line-height:1;white-space:nowrap;color:#303030;font-weight:normal;left:184.25px;width:300px;text-align:center;">-</div>
<div style="position:absolute;top:184.74px;font-size:8.4px;line-height:1;white-space:nowrap;color:#303030;font-weight:normal;left:236.50px;width:300px;text-align:center;">-</div>
<div style="position:absolute;top:184.74px;font-size:8.4px;line-height:1;white-space:nowrap;color:#303030;font-weight:normal;left:309.00px;width:300px;text-align:center;">-50,000</div>
<div style="position:absolute;top:184.74px;font-size:8.4px;line-height:1;white-space:nowrap;color:#303030;font-weight:normal;left:360.00px;width:300px;text-align:center;">-</div>
<div style="position:absolute;top:184.74px;font-size:8.4px;line-height:1;white-space:nowrap;color:#303030;font-weight:normal;left:405.50px;width:300px;text-align:center;">-</div>
<div style="position:absolute;top:184.74px;font-size:8.4px;line-height:1;white-space:nowrap;color:#303030;font-weight:normal;left:451.25px;width:300px;text-align:center;">-</div>
<div style="position:absolute;top:184.74px;font-size:8.4px;line-height:1;white-space:nowrap;color:#303030;font-weight:normal;left:496.50px;width:300px;text-align:center;">-</div>
<div style="position:absolute;top:184.74px;font-size:8.4px;line-height:1;white-space:nowrap;color:#303030;font-weight:normal;left:541.50px;width:300px;text-align:center;">-</div>
<div style="position:absolute;top:184.74px;font-size:8.4px;line-height:1;white-space:nowrap;color:#303030;font-weight:normal;left:587.00px;width:300px;text-align:center;">-</div>
<div style="position:absolute;top:184.74px;font-size:8.4px;line-height:1;white-space:nowrap;color:#303030;font-weight:normal;left:632.50px;width:300px;text-align:center;">-</div>
<div style="position:absolute;top:184.74px;font-size:8.4px;line-height:1;white-space:nowrap;color:#303030;font-weight:normal;left:676.75px;width:300px;text-align:center;">-</div>
<div style="position:absolute;top:184.74px;font-size:8.4px;line-height:1;white-space:nowrap;color:#303030;font-weight:normal;left:720.50px;width:300px;text-align:center;">-</div>
<div style="position:absolute;top:184.74px;font-size:8.4px;line-height:1;white-space:nowrap;color:#303030;font-weight:normal;left:764.75px;width:300px;text-align:center;">-</div>
<div style="position:absolute;top:184.74px;font-size:8.4px;line-height:1;white-space:nowrap;color:#303030;font-weight:normal;left:809.00px;width:300px;text-align:center;">-</div>
<div style="position:absolute;top:196.70px;font-size:8.4px;line-height:1;white-space:nowrap;color:#303030;font-weight:normal;left:30.60px;">Debt Drawdowns/(Repayments</div>
<div style="position:absolute;top:196.70px;font-size:8.4px;line-height:1;white-space:nowrap;color:#303030;font-weight:normal;left:26.85px;width:300px;text-align:center;">-750</div>
<div style="position:absolute;top:196.70px;font-size:8.4px;line-height:1;white-space:nowrap;color:#303030;font-weight:normal;left:80.25px;width:300px;text-align:center;">-750</div>
<div style="position:absolute;top:196.70px;font-size:8.4px;line-height:1;white-space:nowrap;color:#303030;font-weight:normal;left:131.75px;width:300px;text-align:center;">-750</div>
<div style="position:absolute;top:196.70px;font-size:8.4px;line-height:1;white-space:nowrap;color:#303030;font-weight:normal;left:184.25px;width:300px;text-align:center;">-750</div>
<div style="position:absolute;top:196.70px;font-size:8.4px;line-height:1;white-space:nowrap;color:#303030;font-weight:normal;left:236.50px;width:300px;text-align:center;">-750</div>
<div style="position:absolute;top:196.70px;font-size:8.4px;line-height:1;white-space:nowrap;color:#303030;font-weight:normal;left:309.00px;width:300px;text-align:center;">-</div>
<div style="position:absolute;top:196.70px;font-size:8.4px;line-height:1;white-space:nowrap;color:#303030;font-weight:normal;left:360.00px;width:300px;text-align:center;">-750</div>
<div style="position:absolute;top:196.70px;font-size:8.4px;line-height:1;white-space:nowrap;color:#303030;font-weight:normal;left:405.50px;width:300px;text-align:center;">-750</div>
<div style="position:absolute;top:196.70px;font-size:8.4px;line-height:1;white-space:nowrap;color:#303030;font-weight:normal;left:451.25px;width:300px;text-align:center;">-750</div>
<div style="position:absolute;top:196.70px;font-size:8.4px;line-height:1;white-space:nowrap;color:#303030;font-weight:normal;left:496.50px;width:300px;text-align:center;">-750</div>
<div style="position:absolute;top:196.70px;font-size:8.4px;line-height:1;white-space:nowrap;color:#303030;font-weight:normal;left:541.50px;width:300px;text-align:center;">-750</div>
<div style="position:absolute;top:196.70px;font-size:8.4px;line-height:1;white-space:nowrap;color:#303030;font-weight:normal;left:587.00px;width:300px;text-align:center;">-750</div>
<div style="position:absolute;top:196.70px;font-size:8.4px;line-height:1;white-space:nowrap;color:#303030;font-weight:normal;left:632.50px;width:300px;text-align:center;">-750</div>
<div style="position:absolute;top:196.70px;font-size:8.4px;line-height:1;white-space:nowrap;color:#303030;font-weight:normal;left:676.75px;width:300px;text-align:center;">-750</div>
<div style="position:absolute;top:196.70px;font-size:8.4px;line-height:1;white-space:nowrap;color:#303030;font-weight:normal;left:720.50px;width:300px;text-align:center;">-750</div>
<div style="position:absolute;top:196.70px;font-size:8.4px;line-height:1;white-space:nowrap;color:#303030;font-weight:normal;left:764.75px;width:300px;text-align:center;">-750</div>
<div style="position:absolute;top:196.70px;font-size:8.4px;line-height:1;white-space:nowrap;color:#303030;font-weight:normal;left:809.00px;width:300px;text-align:center;">-750</div>
<div style="position:absolute;top:208.66px;font-size:8.4px;line-height:1;white-space:nowrap;color:#303030;font-weight:normal;left:30.60px;">Equity Raisings/(Buybacks)</div>
<div style="position:absolute;top:208.66px;font-size:8.4px;line-height:1;white-space:nowrap;color:#303030;font-weight:normal;left:26.85px;width:300px;text-align:center;">-</div>
<div style="position:absolute;top:208.66px;font-size:8.4px;line-height:1;white-space:nowrap;color:#303030;font-weight:normal;left:80.25px;width:300px;text-align:center;">-</div>
<div style="position:absolute;top:208.66px;font-size:8.4px;line-height:1;white-space:nowrap;color:#303030;font-weight:normal;left:131.75px;width:300px;text-align:center;">-</div>
<div style="position:absolute;top:208.66px;font-size:8.4px;line-height:1;white-space:nowrap;color:#303030;font-weight:normal;left:184.25px;width:300px;text-align:center;">-</div>
<div style="position:absolute;top:208.66px;font-size:8.4px;line-height:1;white-space:nowrap;color:#303030;font-weight:normal;left:236.50px;width:300px;text-align:center;">-</div>
<div style="position:absolute;top:208.66px;font-size:8.4px;line-height:1;white-space:nowrap;color:#303030;font-weight:normal;left:309.00px;width:300px;text-align:center;">-</div>
<div style="position:absolute;top:208.66px;font-size:8.4px;line-height:1;white-space:nowrap;color:#303030;font-weight:normal;left:360.00px;width:300px;text-align:center;">-</div>
<div style="position:absolute;top:208.66px;font-size:8.4px;line-height:1;white-space:nowrap;color:#303030;font-weight:normal;left:405.50px;width:300px;text-align:center;">-</div>
<div style="position:absolute;top:208.66px;font-size:8.4px;line-height:1;white-space:nowrap;color:#303030;font-weight:normal;left:451.25px;width:300px;text-align:center;">-</div>
<div style="position:absolute;top:208.66px;font-size:8.4px;line-height:1;white-space:nowrap;color:#303030;font-weight:normal;left:496.50px;width:300px;text-align:center;">-</div>
<div style="position:absolute;top:208.66px;font-size:8.4px;line-height:1;white-space:nowrap;color:#303030;font-weight:normal;left:541.50px;width:300px;text-align:center;">-</div>
<div style="position:absolute;top:208.66px;font-size:8.4px;line-height:1;white-space:nowrap;color:#303030;font-weight:normal;left:587.00px;width:300px;text-align:center;">-</div>
<div style="position:absolute;top:208.66px;font-size:8.4px;line-height:1;white-space:nowrap;color:#303030;font-weight:normal;left:632.50px;width:300px;text-align:center;">-</div>
<div style="position:absolute;top:208.66px;font-size:8.4px;line-height:1;white-space:nowrap;color:#303030;font-weight:normal;left:676.75px;width:300px;text-align:center;">-</div>
<div style="position:absolute;top:208.66px;font-size:8.4px;line-height:1;white-space:nowrap;color:#303030;font-weight:normal;left:720.50px;width:300px;text-align:center;">-</div>
<div style="position:absolute;top:208.66px;font-size:8.4px;line-height:1;white-space:nowrap;color:#303030;font-weight:normal;left:764.75px;width:300px;text-align:center;">-</div>
<div style="position:absolute;top:208.66px;font-size:8.4px;line-height:1;white-space:nowrap;color:#303030;font-weight:normal;left:809.00px;width:300px;text-align:center;">-</div>
<div style="position:absolute;top:220.62px;font-size:8.4px;line-height:1;white-space:nowrap;color:#303030;font-weight:normal;left:30.60px;">Other Financing Cash Flows</div>
<div style="position:absolute;top:220.62px;font-size:8.4px;line-height:1;white-space:nowrap;color:#303030;font-weight:normal;left:26.85px;width:300px;text-align:center;">-</div>
<div style="position:absolute;top:220.62px;font-size:8.4px;line-height:1;white-space:nowrap;color:#303030;font-weight:normal;left:80.25px;width:300px;text-align:center;">-</div>
<div style="position:absolute;top:220.62px;font-size:8.4px;line-height:1;white-space:nowrap;color:#303030;font-weight:normal;left:131.75px;width:300px;text-align:center;">-</div>
<div style="position:absolute;top:220.62px;font-size:8.4px;line-height:1;white-space:nowrap;color:#303030;font-weight:normal;left:184.25px;width:300px;text-align:center;">-</div>
<div style="position:absolute;top:220.62px;font-size:8.4px;line-height:1;white-space:nowrap;color:#303030;font-weight:normal;left:236.50px;width:300px;text-align:center;">-</div>
<div style="position:absolute;top:220.62px;font-size:8.4px;line-height:1;white-space:nowrap;color:#303030;font-weight:normal;left:309.00px;width:300px;text-align:center;">-</div>
<div style="position:absolute;top:220.62px;font-size:8.4px;line-height:1;white-space:nowrap;color:#303030;font-weight:normal;left:360.00px;width:300px;text-align:center;">-</div>
<div style="position:absolute;top:220.62px;font-size:8.4px;line-height:1;white-space:nowrap;color:#303030;font-weight:normal;left:405.50px;width:300px;text-align:center;">-</div>
<div style="position:absolute;top:220.62px;font-size:8.4px;line-height:1;white-space:nowrap;color:#303030;font-weight:normal;left:451.25px;width:300px;text-align:center;">-</div>
<div style="position:absolute;top:220.62px;font-size:8.4px;line-height:1;white-space:nowrap;color:#303030;font-weight:normal;left:496.50px;width:300px;text-align:center;">-</div>
<div style="position:absolute;top:220.62px;font-size:8.4px;line-height:1;white-space:nowrap;color:#303030;font-weight:normal;left:541.50px;width:300px;text-align:center;">-</div>
<div style="position:absolute;top:220.62px;font-size:8.4px;line-height:1;white-space:nowrap;color:#303030;font-weight:normal;left:587.00px;width:300px;text-align:center;">-</div>
<div style="position:absolute;top:220.62px;font-size:8.4px;line-height:1;white-space:nowrap;color:#303030;font-weight:normal;left:632.50px;width:300px;text-align:center;">-</div>
<div style="position:absolute;top:220.62px;font-size:8.4px;line-height:1;white-space:nowrap;color:#303030;font-weight:normal;left:676.75px;width:300px;text-align:center;">-</div>
<div style="position:absolute;top:220.62px;font-size:8.4px;line-height:1;white-space:nowrap;color:#303030;font-weight:normal;left:720.50px;width:300px;text-align:center;">-</div>
<div style="position:absolute;top:220.62px;font-size:8.4px;line-height:1;white-space:nowrap;color:#303030;font-weight:normal;left:764.75px;width:300px;text-align:center;">-</div>
<div style="position:absolute;top:220.62px;font-size:8.4px;line-height:1;white-space:nowrap;color:#303030;font-weight:normal;left:809.00px;width:300px;text-align:center;">-</div>
<div style="position:absolute;top:232.58px;font-size:8.4px;line-height:1;white-space:nowrap;color:#303030;font-weight:normal;left:30.60px;">Financing Cash Flows</div>
<div style="position:absolute;top:232.58px;font-size:8.4px;line-height:1;white-space:nowrap;color:#303030;font-weight:normal;left:26.85px;width:300px;text-align:center;">-750</div>
<div style="position:absolute;top:232.58px;font-size:8.4px;line-height:1;white-space:nowrap;color:#303030;font-weight:normal;left:80.25px;width:300px;text-align:center;">-750</div>
<div style="position:absolute;top:232.58px;font-size:8.4px;line-height:1;white-space:nowrap;color:#303030;font-weight:normal;left:131.75px;width:300px;text-align:center;">-750</div>
<div style="position:absolute;top:232.58px;font-size:8.4px;line-height:1;white-space:nowrap;color:#303030;font-weight:normal;left:184.25px;width:300px;text-align:center;">-750</div>
<div style="position:absolute;top:232.58px;font-size:8.4px;line-height:1;white-space:nowrap;color:#303030;font-weight:normal;left:236.50px;width:300px;text-align:center;">-750</div>
<div style="position:absolute;top:232.58px;font-size:8.4px;line-height:1;white-space:nowrap;color:#303030;font-weight:normal;left:309.00px;width:300px;text-align:center;">-</div>
<div style="position:absolute;top:232.58px;font-size:8.4px;line-height:1;white-space:nowrap;color:#303030;font-weight:normal;left:360.00px;width:300px;text-align:center;">-750</div>
<div style="position:absolute;top:232.58px;font-size:8.4px;line-height:1;white-space:nowrap;color:#303030;font-weight:normal;left:405.50px;width:300px;text-align:center;">-750</div>
<div style="position:absolute;top:232.58px;font-size:8.4px;line-height:1;white-space:nowrap;color:#303030;font-weight:normal;left:451.25px;width:300px;text-align:center;">-750</div>
<div style="position:absolute;top:232.58px;font-size:8.4px;line-height:1;white-space:nowrap;color:#303030;font-weight:normal;left:496.50px;width:300px;text-align:center;">-750</div>
<div style="position:absolute;top:232.58px;font-size:8.4px;line-height:1;white-space:nowrap;color:#303030;font-weight:normal;left:541.50px;width:300px;text-align:center;">-750</div>
<div style="position:absolute;top:232.58px;font-size:8.4px;line-height:1;white-space:nowrap;color:#303030;font-weight:normal;left:587.00px;width:300px;text-align:center;">-750</div>
<div style="position:absolute;top:232.58px;font-size:8.4px;line-height:1;white-space:nowrap;color:#303030;font-weight:normal;left:632.50px;width:300px;text-align:center;">-750</div>
<div style="position:absolute;top:232.58px;font-size:8.4px;line-height:1;white-space:nowrap;color:#303030;font-weight:normal;left:676.75px;width:300px;text-align:center;">-750</div>
<div style="position:absolute;top:232.58px;font-size:8.4px;line-height:1;white-space:nowrap;color:#303030;font-weight:normal;left:720.50px;width:300px;text-align:center;">-750</div>
<div style="position:absolute;top:232.58px;font-size:8.4px;line-height:1;white-space:nowrap;color:#303030;font-weight:normal;left:764.75px;width:300px;text-align:center;">-750</div>
<div style="position:absolute;top:232.58px;font-size:8.4px;line-height:1;white-space:nowrap;color:#303030;font-weight:normal;left:809.00px;width:300px;text-align:center;">-750</div>
<div style="position:absolute;top:244.54px;font-size:8.4px;line-height:1;white-space:nowrap;color:#303030;font-weight:normal;left:30.60px;">Change In Cash Held</div>
<div style="position:absolute;top:244.54px;font-size:8.4px;line-height:1;white-space:nowrap;color:#303030;font-weight:normal;left:26.85px;width:300px;text-align:center;">504,178</div>
<div style="position:absolute;top:244.54px;font-size:8.4px;line-height:1;white-space:nowrap;color:#303030;font-weight:normal;left:80.25px;width:300px;text-align:center;">545,159</div>
<div style="position:absolute;top:244.54px;font-size:8.4px;line-height:1;white-space:nowrap;color:#303030;font-weight:normal;left:131.75px;width:300px;text-align:center;">624,772</div>
<div style="position:absolute;top:244.54px;font-size:8.4px;line-height:1;white-space:nowrap;color:#303030;font-weight:normal;left:184.25px;width:300px;text-align:center;">577,814</div>
<div style="position:absolute;top:244.54px;font-size:8.4px;line-height:1;white-space:nowrap;color:#303030;font-weight:normal;left:236.50px;width:300px;text-align:center;">632,721</div>
<div style="position:absolute;top:244.54px;font-size:8.4px;line-height:1;white-space:nowrap;color:#303030;font-weight:normal;left:309.00px;width:300px;text-align:center;">-50,000</div>
<div style="position:absolute;top:244.54px;font-size:8.4px;line-height:1;white-space:nowrap;color:#303030;font-weight:normal;left:360.00px;width:300px;text-align:center;">455,234</div>
<div style="position:absolute;top:244.54px;font-size:8.4px;line-height:1;white-space:nowrap;color:#303030;font-weight:normal;left:405.50px;width:300px;text-align:center;">403,452</div>
<div style="position:absolute;top:244.54px;font-size:8.4px;line-height:1;white-space:nowrap;color:#303030;font-weight:normal;left:451.25px;width:300px;text-align:center;">477,314</div>
<div style="position:absolute;top:244.54px;font-size:8.4px;line-height:1;white-space:nowrap;color:#303030;font-weight:normal;left:496.50px;width:300px;text-align:center;">415,700</div>
<div style="position:absolute;top:244.54px;font-size:8.4px;line-height:1;white-space:nowrap;color:#303030;font-weight:normal;left:541.50px;width:300px;text-align:center;">440,902</div>
<div style="position:absolute;top:244.54px;font-size:8.4px;line-height:1;white-space:nowrap;color:#303030;font-weight:normal;left:587.00px;width:300px;text-align:center;">427,308</div>
<div style="position:absolute;top:244.54px;font-size:8.4px;line-height:1;white-space:nowrap;color:#303030;font-weight:normal;left:632.50px;width:300px;text-align:center;">447,442</div>
<div style="position:absolute;top:244.54px;font-size:8.4px;line-height:1;white-space:nowrap;color:#303030;font-weight:normal;left:676.75px;width:300px;text-align:center;">457,592</div>
<div style="position:absolute;top:244.54px;font-size:8.4px;line-height:1;white-space:nowrap;color:#303030;font-weight:normal;left:720.50px;width:300px;text-align:center;">501,502</div>
<div style="position:absolute;top:244.54px;font-size:8.4px;line-height:1;white-space:nowrap;color:#303030;font-weight:normal;left:764.75px;width:300px;text-align:center;">511,212</div>
<div style="position:absolute;top:244.54px;font-size:8.4px;line-height:1;white-space:nowrap;color:#303030;font-weight:normal;left:809.00px;width:300px;text-align:center;">504,178</div>
<div style="position:absolute;top:256.50px;font-size:8.4px;line-height:1;white-space:nowrap;color:#303030;font-weight:normal;left:30.60px;">Closing Cash</div>
<div style="position:absolute;top:256.50px;font-size:8.4px;line-height:1;white-space:nowrap;color:#303030;font-weight:normal;left:26.85px;width:300px;text-align:center;">1,007,605</div>
<div style="position:absolute;top:256.50px;font-size:8.4px;line-height:1;white-space:nowrap;color:#303030;font-weight:normal;left:80.25px;width:300px;text-align:center;">1,089,568</div>
<div style="position:absolute;top:256.50px;font-size:8.4px;line-height:1;white-space:nowrap;color:#303030;font-weight:normal;left:131.75px;width:300px;text-align:center;">1,248,794</div>
<div style="position:absolute;top:256.50px;font-size:8.4px;line-height:1;white-space:nowrap;color:#303030;font-weight:normal;left:184.25px;width:300px;text-align:center;">1,154,879</div>
<div style="position:absolute;top:256.50px;font-size:8.4px;line-height:1;white-space:nowrap;color:#303030;font-weight:normal;left:236.50px;width:300px;text-align:center;">1,264,693</div>
<div style="position:absolute;top:256.50px;font-size:8.4px;line-height:1;white-space:nowrap;color:#303030;font-weight:normal;left:309.00px;width:300px;text-align:center;">644,903</div>
<div style="position:absolute;top:256.50px;font-size:8.4px;line-height:1;white-space:nowrap;color:#303030;font-weight:normal;left:360.00px;width:300px;text-align:center;">909,719</div>
<div style="position:absolute;top:256.50px;font-size:8.4px;line-height:1;white-space:nowrap;color:#303030;font-weight:normal;left:405.50px;width:300px;text-align:center;">806,153</div>
<div style="position:absolute;top:256.50px;font-size:8.4px;line-height:1;white-space:nowrap;color:#303030;font-weight:normal;left:451.25px;width:300px;text-align:center;">953,877</div>
<div style="position:absolute;top:256.50px;font-size:8.4px;line-height:1;white-space:nowrap;color:#303030;font-weight:normal;left:496.50px;width:300px;text-align:center;">830,649</div>
<div style="position:absolute;top:256.50px;font-size:8.4px;line-height:1;white-space:nowrap;color:#303030;font-weight:normal;left:541.50px;width:300px;text-align:center;">881,053</div>
<div style="position:absolute;top:256.50px;font-size:8.4px;line-height:1;white-space:nowrap;color:#303030;font-weight:normal;left:587.00px;width:300px;text-align:center;">853,865</div>
<div style="position:absolute;top:256.50px;font-size:8.4px;line-height:1;white-space:nowrap;color:#303030;font-weight:normal;left:632.50px;width:300px;text-align:center;">894,133</div>
<div style="position:absolute;top:256.50px;font-size:8.4px;line-height:1;white-space:nowrap;color:#303030;font-weight:normal;left:676.75px;width:300px;text-align:center;">914,433</div>
<div style="position:absolute;top:256.50px;font-size:8.4px;line-height:1;white-space:nowrap;color:#303030;font-weight:normal;left:720.50px;width:300px;text-align:center;">1,002,253</div>
<div style="position:absolute;top:256.50px;font-size:8.4px;line-height:1;white-space:nowrap;color:#303030;font-weight:normal;left:764.75px;width:300px;text-align:center;">1,021,673</div>
<div style="position:absolute;top:256.50px;font-size:8.4px;line-height:1;white-space:nowrap;color:#303030;font-weight:normal;left:809.00px;width:300px;text-align:center;">1,007,605</div>
<div style="position:absolute;left:28.40px;top:278.63px;width:384.10px;height:11.96px;background:#2f5597;"></div>
<div style="position:absolute;left:429.00px;top:278.63px;width:551.00px;height:11.96px;background:#2f5597;"></div>
<div style="position:absolute;top:280.87px;font-size:8.7px;line-height:1;white-space:nowrap;color:#ffffff;font-weight:bold;left:30.60px;transform:scaleX(0.9350);transform-origin:0 0;">Cash Flow Statement 5 Years to December 2029</div>
<div style="position:absolute;top:280.87px;font-size:8.7px;line-height:1;white-space:nowrap;color:#ffffff;font-weight:bold;left:636.00px;transform:scaleX(0.9334);transform-origin:0 0;">Cash Flow Statement Summer 2025</div>
<div style="position:absolute;left:28.40px;top:541.75px;width:951.60px;height:11.96px;background:#2f5597;"></div>
<div style="position:absolute;top:543.99px;font-size:8.7px;line-height:1;white-space:nowrap;color:#ffffff;font-weight:bold;left:30.60px;transform:scaleX(0.9549);transform-origin:0 0;">Income Statement 5 Years to December 2029</div>
<div style="position:absolute;top:543.99px;font-size:8.7px;line-height:1;white-space:nowrap;color:#ffffff;font-weight:bold;left:641.00px;transform:scaleX(0.9570);transform-origin:0 0;">Income Statement Summer 2025</div>
<svg style="position:absolute;left:0;top:0;font-family:'Liberation Sans',sans-serif" width="1000" height="592" viewBox="0 0 1000 592"><rect x="28.8" y="296.5" width="386.7" height="224" fill="#ffffff" stroke="#e8e8e8" stroke-width="1"/><line x1="132.5" y1="305.61" x2="403" y2="305.61" stroke="#dedede" stroke-width="0.8"/><text x="124" y="308.51" font-size="7" fill="#595959" text-anchor="end">1,400,000</text><line x1="132.5" y1="322.98" x2="403" y2="322.98" stroke="#dedede" stroke-width="0.8"/><text x="124" y="325.88" font-size="7" fill="#595959" text-anchor="end">1,200,000</text><line x1="132.5" y1="340.35" x2="403" y2="340.35" stroke="#dedede" stroke-width="0.8"/><text x="124" y="343.25" font-size="7" fill="#595959" text-anchor="end">1,000,000</text><line x1="132.5" y1="357.72" x2="403" y2="357.72" stroke="#dedede" stroke-width="0.8"/><text x="124" y="360.62" font-size="7" fill="#595959" text-anchor="end">800,000</text><line x1="132.5" y1="375.09" x2="403" y2="375.09" stroke="#dedede" stroke-width="0.8"/><text x="124" y="377.99" font-size="7" fill="#595959" text-anchor="end">600,000</text><line x1="132.5" y1="392.46" x2="403" y2="392.46" stroke="#dedede" stroke-width="0.8"/><text x="124" y="395.36" font-size="7" fill="#595959" text-anchor="end">400,000</text><line x1="132.5" y1="409.83" x2="403" y2="409.83" stroke="#dedede" stroke-width="0.8"/><text x="124" y="412.73" font-size="7" fill="#595959" text-anchor="end">200,000</text><line x1="132.5" y1="427.20" x2="403" y2="427.20" stroke="#dedede" stroke-width="0.8"/><text x="124" y="430.10" font-size="7" fill="#595959" text-anchor="end">0</text><line x1="132.5" y1="444.57" x2="403" y2="444.57" stroke="#dedede" stroke-width="0.8"/><text x="124" y="447.47" font-size="7" fill="#595959" text-anchor="end">-200,000</text><rect x="141.10" y="383.41" width="9.40" height="43.79" fill="#4472c4"/><rect x="165.50" y="427.20" width="9.40" height="0.07" fill="#a5a5a5"/><rect x="196.00" y="379.85" width="9.40" height="47.35" fill="#4472c4"/><rect x="220.40" y="427.20" width="9.40" height="0.07" fill="#a5a5a5"/><rect x="250.90" y="372.94" width="9.40" height="54.26" fill="#4472c4"/><rect x="275.30" y="427.20" width="9.40" height="0.07" fill="#a5a5a5"/><rect x="305.80" y="377.02" width="9.40" height="50.18" fill="#4472c4"/><rect x="330.20" y="427.20" width="9.40" height="0.07" fill="#a5a5a5"/><rect x="360.70" y="372.25" width="9.40" height="54.95" fill="#4472c4"/><rect x="385.10" y="427.20" width="9.40" height="0.07" fill="#a5a5a5"/><polyline points="158.00,383.41 212.90,379.85 267.80,372.94 322.70,377.02 377.60,372.25" fill="none" stroke="#ffc000" stroke-width="2.1" stroke-linejoin="round" stroke-linecap="round"/><polyline points="158.00,339.69 212.90,332.57 267.80,318.74 322.70,326.90 377.60,317.36" fill="none" stroke="#5592d2" stroke-width="2.1" stroke-linejoin="round" stroke-linecap="round"/><g stroke="#e4e4e4" stroke-width="0.8"><line x1="42" y1="456.40" x2="405.05" y2="456.40"/><line x1="42" y1="468.20" x2="405.05" y2="468.20"/><line x1="42" y1="480.00" x2="405.05" y2="480.00"/><line x1="42" y1="491.80" x2="405.05" y2="491.80"/><line x1="42" y1="503.60" x2="405.05" y2="503.60"/><line x1="42" y1="515.40" x2="405.05" y2="515.40"/><line x1="42" y1="456.40" x2="42" y2="515.40"/><line x1="130.55" y1="444.60" x2="130.55" y2="515.40"/><line x1="185.45" y1="444.60" x2="185.45" y2="515.40"/><line x1="240.35" y1="444.60" x2="240.35" y2="515.40"/><line x1="295.25" y1="444.60" x2="295.25" y2="515.40"/><line x1="350.15" y1="444.60" x2="350.15" y2="515.40"/><line x1="405.05" y1="444.60" x2="405.05" y2="515.40"/></g><text x="158.00" y="452.90" font-size="7" fill="#595959" text-anchor="middle">2025</text><text x="212.90" y="452.90" font-size="7" fill="#595959" text-anchor="middle">2026</text><text x="267.80" y="452.90" font-size="7" fill="#595959" text-anchor="middle">2027</text><text x="322.70" y="452.90" font-size="7" fill="#595959" text-anchor="middle">2028</text><text x="377.60" y="452.90" font-size="7" fill="#595959" text-anchor="middle">2029</text><rect x="45" y="460.30" width="15.399999999999999" height="4" fill="#4472c4"/><text x="63" y="464.60" font-size="6.6" fill="#595959" textLength="65" lengthAdjust="spacingAndGlyphs">Operating Cash Flows</text><text x="158.00" y="464.70" font-size="7" fill="#595959" text-anchor="middle">504,178</text><text x="212.90" y="464.70" font-size="7" fill="#595959" text-anchor="middle">545,159</text><text x="267.80" y="464.70" font-size="7" fill="#595959" text-anchor="middle">624,772</text><text x="322.70" y="464.70" font-size="7" fill="#595959" text-anchor="middle">577,814</text><text x="377.60" y="464.70" font-size="7" fill="#595959" text-anchor="middle">632,721</text><rect x="45" y="472.10" width="15.399999999999999" height="4" fill="#ed7d31"/><text x="63" y="476.40" font-size="6.6" fill="#595959" textLength="62" lengthAdjust="spacingAndGlyphs">Investing Cash Flows</text><text x="158.00" y="476.50" font-size="7" fill="#595959" text-anchor="middle">0</text><text x="212.90" y="476.50" font-size="7" fill="#595959" text-anchor="middle">0</text><text x="267.80" y="476.50" font-size="7" fill="#595959" text-anchor="middle">0</text><text x="322.70" y="476.50" font-size="7" fill="#595959" text-anchor="middle">0</text><text x="377.60" y="476.50" font-size="7" fill="#595959" text-anchor="middle">0</text><rect x="45" y="483.90" width="15.399999999999999" height="4" fill="#a5a5a5"/><text x="63" y="488.20" font-size="6.6" fill="#595959" textLength="63.5" lengthAdjust="spacingAndGlyphs">Financing Cash Flows</text><text x="158.00" y="488.30" font-size="7" fill="#595959" text-anchor="middle">-750</text><text x="212.90" y="488.30" font-size="7" fill="#595959" text-anchor="middle">-750</text><text x="267.80" y="488.30" font-size="7" fill="#595959" text-anchor="middle">-750</text><text x="322.70" y="488.30" font-size="7" fill="#595959" text-anchor="middle">-750</text><text x="377.60" y="488.30" font-size="7" fill="#595959" text-anchor="middle">-750</text><line x1="45" y1="497.70" x2="60.4" y2="497.70" stroke="#ffc000" stroke-width="2"/><text x="63" y="500.00" font-size="6.6" fill="#595959" textLength="62" lengthAdjust="spacingAndGlyphs">Change In Cash Held</text><text x="158.00" y="500.10" font-size="7" fill="#595959" text-anchor="middle">504,178</text><text x="212.90" y="500.10" font-size="7" fill="#595959" text-anchor="middle">545,159</text><text x="267.80" y="500.10" font-size="7" fill="#595959" text-anchor="middle">624,772</text><text x="322.70" y="500.10" font-size="7" fill="#595959" text-anchor="middle">577,814</text><text x="377.60" y="500.10" font-size="7" fill="#595959" text-anchor="middle">632,721</text><line x1="45" y1="509.50" x2="60.4" y2="509.50" stroke="#5592d2" stroke-width="2"/><text x="63" y="511.80" font-size="6.6" fill="#595959" textLength="37" lengthAdjust="spacingAndGlyphs">Closing Cash</text><text x="158.00" y="511.90" font-size="7" fill="#595959" text-anchor="middle">1,007,605</text><text x="212.90" y="511.90" font-size="7" fill="#595959" text-anchor="middle">1,089,568</text><text x="267.80" y="511.90" font-size="7" fill="#595959" text-anchor="middle">1,248,794</text><text x="322.70" y="511.90" font-size="7" fill="#595959" text-anchor="middle">1,154,879</text><text x="377.60" y="511.90" font-size="7" fill="#595959" text-anchor="middle">1,264,693</text></svg>
<svg style="position:absolute;left:0;top:0;font-family:'Liberation Sans',sans-serif" width="1000" height="592" viewBox="0 0 1000 592"><rect x="429.5" y="294.8" width="553.5" height="224.49999999999994" fill="#ffffff" stroke="#e8e8e8" stroke-width="1"/><line x1="531.8" y1="303.40" x2="975.5" y2="303.40" stroke="#dedede" stroke-width="0.8"/><text x="525.3" y="306.30" font-size="7" fill="#595959" text-anchor="end">1,200,000</text><line x1="531.8" y1="323.30" x2="975.5" y2="323.30" stroke="#dedede" stroke-width="0.8"/><text x="525.3" y="326.20" font-size="7" fill="#595959" text-anchor="end">1,000,000</text><line x1="531.8" y1="343.20" x2="975.5" y2="343.20" stroke="#dedede" stroke-width="0.8"/><text x="525.3" y="346.10" font-size="7" fill="#595959" text-anchor="end">800,000</text><line x1="531.8" y1="363.10" x2="975.5" y2="363.10" stroke="#dedede" stroke-width="0.8"/><text x="525.3" y="366.00" font-size="7" fill="#595959" text-anchor="end">600,000</text><line x1="531.8" y1="383.00" x2="975.5" y2="383.00" stroke="#dedede" stroke-width="0.8"/><text x="525.3" y="385.90" font-size="7" fill="#595959" text-anchor="end">400,000</text><line x1="531.8" y1="402.90" x2="975.5" y2="402.90" stroke="#dedede" stroke-width="0.8"/><text x="525.3" y="405.80" font-size="7" fill="#595959" text-anchor="end">200,000</text><line x1="531.8" y1="422.80" x2="975.5" y2="422.80" stroke="#dedede" stroke-width="0.8"/><text x="525.3" y="425.70" font-size="7" fill="#595959" text-anchor="end">0</text><line x1="531.8" y1="442.70" x2="975.5" y2="442.70" stroke="#dedede" stroke-width="0.8"/><text x="525.3" y="445.60" font-size="7" fill="#595959" text-anchor="end">-200,000</text><rect x="538.45" y="385.74" width="6.50" height="37.06" fill="#4472c4"/><rect x="546.75" y="422.80" width="6.50" height="4.98" fill="#ed7d31"/><rect x="575.34" y="377.50" width="6.50" height="45.30" fill="#4472c4"/><rect x="591.94" y="422.80" width="6.50" height="0.07" fill="#a5a5a5"/><rect x="612.23" y="382.66" width="6.50" height="40.14" fill="#4472c4"/><rect x="628.83" y="422.80" width="6.50" height="0.07" fill="#a5a5a5"/><rect x="649.12" y="375.31" width="6.50" height="47.49" fill="#4472c4"/><rect x="665.72" y="422.80" width="6.50" height="0.07" fill="#a5a5a5"/><rect x="686.01" y="381.44" width="6.50" height="41.36" fill="#4472c4"/><rect x="702.61" y="422.80" width="6.50" height="0.07" fill="#a5a5a5"/><rect x="722.90" y="378.93" width="6.50" height="43.87" fill="#4472c4"/><rect x="739.50" y="422.80" width="6.50" height="0.07" fill="#a5a5a5"/><rect x="759.79" y="380.28" width="6.50" height="42.52" fill="#4472c4"/><rect x="776.39" y="422.80" width="6.50" height="0.07" fill="#a5a5a5"/><rect x="796.68" y="378.28" width="6.50" height="44.52" fill="#4472c4"/><rect x="813.28" y="422.80" width="6.50" height="0.07" fill="#a5a5a5"/><rect x="833.57" y="377.27" width="6.50" height="45.53" fill="#4472c4"/><rect x="850.17" y="422.80" width="6.50" height="0.07" fill="#a5a5a5"/><rect x="870.46" y="372.90" width="6.50" height="49.90" fill="#4472c4"/><rect x="887.06" y="422.80" width="6.50" height="0.07" fill="#a5a5a5"/><rect x="907.35" y="371.93" width="6.50" height="50.87" fill="#4472c4"/><rect x="923.95" y="422.80" width="6.50" height="0.07" fill="#a5a5a5"/><rect x="944.24" y="372.63" width="6.50" height="50.17" fill="#4472c4"/><rect x="960.84" y="422.80" width="6.50" height="0.07" fill="#a5a5a5"/><polyline points="550.00,427.78 586.89,377.50 623.78,382.66 660.67,375.31 697.56,381.44 734.45,378.93 771.34,380.28 808.23,378.28 845.12,377.27 882.01,372.90 918.90,371.93 955.79,372.63" fill="none" stroke="#fad66a" stroke-width="2.1" stroke-linejoin="round" stroke-linecap="round"/><polyline points="550.00,358.63 586.89,332.28 623.78,342.59 660.67,327.89 697.56,340.15 734.45,335.14 771.34,337.84 808.23,333.83 845.12,331.81 882.01,323.08 918.90,321.14 955.79,322.54" fill="none" stroke="#2f5c9c" stroke-width="2.1" stroke-linejoin="round" stroke-linecap="round"/><g stroke="#e4e4e4" stroke-width="0.8"><line x1="441.5" y1="455.50" x2="974.23" y2="455.50"/><line x1="441.5" y1="467.20" x2="974.23" y2="467.20"/><line x1="441.5" y1="478.90" x2="974.23" y2="478.90"/><line x1="441.5" y1="490.60" x2="974.23" y2="490.60"/><line x1="441.5" y1="502.30" x2="974.23" y2="502.30"/><line x1="441.5" y1="514.00" x2="974.23" y2="514.00"/><line x1="441.5" y1="455.50" x2="441.5" y2="514.00"/><line x1="531.55" y1="443.80" x2="531.55" y2="514.00"/><line x1="568.44" y1="443.80" x2="568.44" y2="514.00"/><line x1="605.33" y1="443.80" x2="605.33" y2="514.00"/><line x1="642.22" y1="443.80" x2="642.22" y2="514.00"/><line x1="679.12" y1="443.80" x2="679.12" y2="514.00"/><line x1="716.00" y1="443.80" x2="716.00" y2="514.00"/><line x1="752.89" y1="443.80" x2="752.89" y2="514.00"/><line x1="789.78" y1="443.80" x2="789.78" y2="514.00"/><line x1="826.67" y1="443.80" x2="826.67" y2="514.00"/><line x1="863.56" y1="443.80" x2="863.56" y2="514.00"/><line x1="900.45" y1="443.80" x2="900.45" y2="514.00"/><line x1="937.35" y1="443.80" x2="937.35" y2="514.00"/><line x1="974.23" y1="443.80" x2="974.23" y2="514.00"/></g><text x="550.00" y="452.05" font-size="7" fill="#595959" text-anchor="middle">Jan</text><text x="586.89" y="452.05" font-size="7" fill="#595959" text-anchor="middle">Feb</text><text x="623.78" y="452.05" font-size="7" fill="#595959" text-anchor="middle">Mar</text><text x="660.67" y="452.05" font-size="7" fill="#595959" text-anchor="middle">Apr</text><text x="697.56" y="452.05" font-size="7" fill="#595959" text-anchor="middle">May</text><text x="734.45" y="452.05" font-size="7" fill="#595959" text-anchor="middle">Jun</text><text x="771.34" y="452.05" font-size="7" fill="#595959" text-anchor="middle">Jul</text><text x="808.23" y="452.05" font-size="7" fill="#595959" text-anchor="middle">Aug</text><text x="845.12" y="452.05" font-size="7" fill="#595959" text-anchor="middle">Sep</text><text x="882.01" y="452.05" font-size="7" fill="#595959" text-anchor="middle">Oct</text><text x="918.90" y="452.05" font-size="7" fill="#595959" text-anchor="middle">Nov</text><text x="955.79" y="452.05" font-size="7" fill="#595959" text-anchor="middle">Dec</text><rect x="445.5" y="459.35" width="17.0" height="4" fill="#4472c4"/><text x="463.7" y="463.65" font-size="6.6" fill="#595959" textLength="65.8" lengthAdjust="spacingAndGlyphs">Operating Cash Flows</text><text x="550.00" y="463.75" font-size="7" fill="#595959" text-anchor="middle">372,452</text><text x="586.89" y="463.75" font-size="7" fill="#595959" text-anchor="middle">455,234</text><text x="623.78" y="463.75" font-size="7" fill="#595959" text-anchor="middle">403,452</text><text x="660.67" y="463.75" font-size="7" fill="#595959" text-anchor="middle">477,314</text><text x="697.56" y="463.75" font-size="7" fill="#595959" text-anchor="middle">415,700</text><text x="734.45" y="463.75" font-size="7" fill="#595959" text-anchor="middle">440,902</text><text x="771.34" y="463.75" font-size="7" fill="#595959" text-anchor="middle">427,308</text><text x="808.23" y="463.75" font-size="7" fill="#595959" text-anchor="middle">447,442</text><text x="845.12" y="463.75" font-size="7" fill="#595959" text-anchor="middle">457,592</text><text x="882.01" y="463.75" font-size="7" fill="#595959" text-anchor="middle">501,502</text><text x="918.90" y="463.75" font-size="7" fill="#595959" text-anchor="middle">511,212</text><text x="955.79" y="463.75" font-size="7" fill="#595959" text-anchor="middle">504,178</text><rect x="445.5" y="471.05" width="17.0" height="4" fill="#ed7d31"/><text x="463.7" y="475.35" font-size="6.6" fill="#595959" textLength="62" lengthAdjust="spacingAndGlyphs">Investing Cash Flows</text><text x="550.00" y="475.45" font-size="7" fill="#595959" text-anchor="middle">-50,000</text><text x="586.89" y="475.45" font-size="7" fill="#595959" text-anchor="middle">0</text><text x="623.78" y="475.45" font-size="7" fill="#595959" text-anchor="middle">0</text><text x="660.67" y="475.45" font-size="7" fill="#595959" text-anchor="middle">0</text><text x="697.56" y="475.45" font-size="7" fill="#595959" text-anchor="middle">0</text><text x="734.45" y="475.45" font-size="7" fill="#595959" text-anchor="middle">0</text><text x="771.34" y="475.45" font-size="7" fill="#595959" text-anchor="middle">0</text><text x="808.23" y="475.45" font-size="7" fill="#595959" text-anchor="middle">0</text><text x="845.12" y="475.45" font-size="7" fill="#595959" text-anchor="middle">0</text><text x="882.01" y="475.45" font-size="7" fill="#595959" text-anchor="middle">0</text><text x="918.90" y="475.45" font-size="7" fill="#595959" text-anchor="middle">0</text><text x="955.79" y="475.45" font-size="7" fill="#595959" text-anchor="middle">0</text><rect x="445.5" y="482.75" width="17.0" height="4" fill="#a5a5a5"/><text x="463.7" y="487.05" font-size="6.6" fill="#595959" textLength="63.5" lengthAdjust="spacingAndGlyphs">Financing Cash Flows</text><text x="550.00" y="487.15" font-size="7" fill="#595959" text-anchor="middle">0</text><text x="586.89" y="487.15" font-size="7" fill="#595959" text-anchor="middle">-750</text><text x="623.78" y="487.15" font-size="7" fill="#595959" text-anchor="middle">-750</text><text x="660.67" y="487.15" font-size="7" fill="#595959" text-anchor="middle">-750</text><text x="697.56" y="487.15" font-size="7" fill="#595959" text-anchor="middle">-750</text><text x="734.45" y="487.15" font-size="7" fill="#595959" text-anchor="middle">-750</text><text x="771.34" y="487.15" font-size="7" fill="#595959" text-anchor="middle">-750</text><text x="808.23" y="487.15" font-size="7" fill="#595959" text-anchor="middle">-750</text><text x="845.12" y="487.15" font-size="7" fill="#595959" text-anchor="middle">-750</text><text x="882.01" y="487.15" font-size="7" fill="#595959" text-anchor="middle">-750</text><text x="918.90" y="487.15" font-size="7" fill="#595959" text-anchor="middle">-750</text><text x="955.79" y="487.15" font-size="7" fill="#595959" text-anchor="middle">-750</text><line x1="445.5" y1="496.45" x2="462.5" y2="496.45" stroke="#fad66a" stroke-width="2"/><text x="463.7" y="498.75" font-size="6.6" fill="#595959" textLength="62" lengthAdjust="spacingAndGlyphs">Change In Cash Held</text><text x="550.00" y="498.85" font-size="7" fill="#595959" text-anchor="middle">-50,000</text><text x="586.89" y="498.85" font-size="7" fill="#595959" text-anchor="middle">455,234</text><text x="623.78" y="498.85" font-size="7" fill="#595959" text-anchor="middle">403,452</text><text x="660.67" y="498.85" font-size="7" fill="#595959" text-anchor="middle">477,314</text><text x="697.56" y="498.85" font-size="7" fill="#595959" text-anchor="middle">415,700</text><text x="734.45" y="498.85" font-size="7" fill="#595959" text-anchor="middle">440,902</text><text x="771.34" y="498.85" font-size="7" fill="#595959" text-anchor="middle">427,308</text><text x="808.23" y="498.85" font-size="7" fill="#595959" text-anchor="middle">447,442</text><text x="845.12" y="498.85" font-size="7" fill="#595959" text-anchor="middle">457,592</text><text x="882.01" y="498.85" font-size="7" fill="#595959" text-anchor="middle">501,502</text><text x="918.90" y="498.85" font-size="7" fill="#595959" text-anchor="middle">511,212</text><text x="955.79" y="498.85" font-size="7" fill="#595959" text-anchor="middle">504,178</text><line x1="445.5" y1="508.15" x2="462.5" y2="508.15" stroke="#2f5c9c" stroke-width="2"/><text x="463.7" y="510.45" font-size="6.6" fill="#595959" textLength="37" lengthAdjust="spacingAndGlyphs">Closing Cash</text><text x="550.00" y="510.55" font-size="7" fill="#595959" text-anchor="middle">644,903</text><text x="586.89" y="510.55" font-size="7" fill="#595959" text-anchor="middle">909,719</text><text x="623.78" y="510.55" font-size="7" fill="#595959" text-anchor="middle">806,153</text><text x="660.67" y="510.55" font-size="7" fill="#595959" text-anchor="middle">953,877</text><text x="697.56" y="510.55" font-size="7" fill="#595959" text-anchor="middle">830,649</text><text x="734.45" y="510.55" font-size="7" fill="#595959" text-anchor="middle">881,053</text><text x="771.34" y="510.55" font-size="7" fill="#595959" text-anchor="middle">853,865</text><text x="808.23" y="510.55" font-size="7" fill="#595959" text-anchor="middle">894,133</text><text x="845.12" y="510.55" font-size="7" fill="#595959" text-anchor="middle">914,433</text><text x="882.01" y="510.55" font-size="7" fill="#595959" text-anchor="middle">1,002,253</text><text x="918.90" y="510.55" font-size="7" fill="#595959" text-anchor="middle">1,021,673</text><text x="955.79" y="510.55" font-size="7" fill="#595959" text-anchor="middle">1,007,605</text></svg>
<div style="position:absolute;left:987.30px;top:49.00px;width:12.70px;height:510.20px;background:#f9f9f9;"></div>
<div style="position:absolute;left:987.30px;top:49.00px;width:0.70px;height:510.20px;background:#e0e0e0;"></div>
<svg style="position:absolute;left:985px;top:49px" width="15" height="509" viewBox="985 49 15 509"><path d="M991 58.5 L994 54.5 L997 58.5 Z" fill="#606060"/><path d="M991 553 L994 557 L997 553 Z" fill="#606060"/></svg>
<div style="position:absolute;left:991.20px;top:61.30px;width:5.90px;height:151.70px;background:#747474;border-radius:3px;"></div>
<div style="position:absolute;left:0.00px;top:559.20px;width:1000.00px;height:18.30px;background:#e5e5e7;"></div>
<div style="position:absolute;left:449.00px;top:559.20px;width:123.50px;height:18.30px;background:#ffffff;"></div>
<div style="position:absolute;left:454.60px;top:574.00px;width:111.10px;height:1.20px;background:#2a8a55;"></div>
<svg style="position:absolute;left:0;top:559px" width="60" height="18" viewBox="0 559 60 18"><path d="M21 565 L17.8 568.3 L21 571.6" fill="none" stroke="#b8b8b8" stroke-width="1.2"/><path d="M37.5 565 L40.7 568.3 L37.5 571.6" fill="none" stroke="#555" stroke-width="1.2"/></svg>
<div style="position:absolute;left:72.50px;top:559.80px;width:43.60px;height:17.20px;background:#ededf0;"></div>
<div style="position:absolute;top:565.28px;font-size:10.3px;line-height:1;white-space:nowrap;color:#2c2c2c;font-weight:normal;left:79.00px;transform:scaleX(0.8959);transform-origin:0 0;">How To</div>
<div style="position:absolute;left:121.60px;top:560.50px;width:70.90px;height:15.80px;background:#fbfa84;"></div>
<div style="position:absolute;top:565.28px;font-size:10.3px;line-height:1;white-space:nowrap;color:#2c2c2c;font-weight:normal;left:128.00px;transform:scaleX(0.8703);transform-origin:0 0;">2025 Accounts</div>
<div style="position:absolute;left:198.30px;top:559.80px;width:101.00px;height:17.20px;background:#ededf0;"></div>
<div style="position:absolute;top:565.28px;font-size:10.3px;line-height:1;white-space:nowrap;color:#2c2c2c;font-weight:normal;left:204.80px;transform:scaleX(0.8589);transform-origin:0 0;">2025 MRR Dashboard</div>
<div style="position:absolute;left:303.90px;top:559.80px;width:42.10px;height:17.20px;background:#ededf0;"></div>
<div style="position:absolute;top:565.28px;font-size:10.3px;line-height:1;white-space:nowrap;color:#2c2c2c;font-weight:normal;left:310.40px;transform:scaleX(0.8197);transform-origin:0 0;">IS 2025</div>
<div style="position:absolute;left:350.20px;top:559.80px;width:44.30px;height:17.20px;background:#ededf0;"></div>
<div style="position:absolute;top:565.28px;font-size:10.3px;line-height:1;white-space:nowrap;color:#2c2c2c;font-weight:normal;left:356.70px;transform:scaleX(0.7924);transform-origin:0 0;">CF 2025</div>
<div style="position:absolute;left:400.00px;top:559.80px;width:44.50px;height:17.20px;background:#ededf0;"></div>
<div style="position:absolute;top:565.28px;font-size:10.3px;line-height:1;white-space:nowrap;color:#2c2c2c;font-weight:normal;left:406.50px;transform:scaleX(0.7972);transform-origin:0 0;">BS 2025</div>
<div style="position:absolute;top:562.44px;font-size:9.4px;line-height:1;white-space:nowrap;color:#1e1e1e;font-weight:bold;left:455.00px;transform:scaleX(0.9276);transform-origin:0 0;">Statements Summary 2025</div>
<div style="position:absolute;left:576.50px;top:560.50px;width:61.00px;height:15.80px;background:#fbfa84;"></div>
<div style="position:absolute;top:565.28px;font-size:10.3px;line-height:1;white-space:nowrap;color:#2c2c2c;font-weight:normal;left:582.50px;transform:scaleX(0.8074);transform-origin:0 0;">CAPEX 2025</div>
<div style="position:absolute;left:642.60px;top:560.50px;width:72.00px;height:15.80px;background:#fbfa84;"></div>
<div style="position:absolute;top:565.28px;font-size:10.3px;line-height:1;white-space:nowrap;color:#2c2c2c;font-weight:normal;left:649.50px;transform:scaleX(0.8747);transform-origin:0 0;">2026 Accounts</div>
<div style="position:absolute;left:720.20px;top:559.80px;width:100.90px;height:17.20px;background:#ededf0;"></div>
<div style="position:absolute;top:565.28px;font-size:10.3px;line-height:1;white-space:nowrap;color:#2c2c2c;font-weight:normal;left:726.70px;transform:scaleX(0.8580);transform-origin:0 0;">2026 MRR Dashboard</div>
<div style="position:absolute;left:825.30px;top:559.80px;width:42.20px;height:17.20px;background:#ededf0;"></div>
<div style="position:absolute;top:565.28px;font-size:10.3px;line-height:1;white-space:nowrap;color:#2c2c2c;font-weight:normal;left:831.80px;transform:scaleX(0.8225);transform-origin:0 0;">IS 2026</div>
<div style="position:absolute;left:879.00px;top:563.50px;width:1.20px;height:9.00px;background:#555555;"></div>
<svg style="position:absolute;left:880px;top:558px" width="120" height="20" viewBox="880 558 120 20">
<line x1="886" y1="568.8" x2="894" y2="568.8" stroke="#444" stroke-width="1.2"/>
<line x1="906" y1="568.8" x2="916" y2="568.8" stroke="#444" stroke-width="1.1"/><line x1="911" y1="563.8" x2="911" y2="573.8" stroke="#444" stroke-width="1.1"/>
<circle cx="932" cy="563.5" r="0.8" fill="#555"/><circle cx="932" cy="567.5" r="0.8" fill="#555"/><circle cx="932" cy="571.5" r="0.8" fill="#555"/>
<path d="M950 566 L947 569 L950 572" fill="#606060"/>
<rect x="953.5" y="566" width="20" height="5.6" rx="2.8" fill="#7a7a7a"/>
<path d="M982 566 L985 569 L982 572" fill="#606060"/>
</svg>
<div style="position:absolute;left:0.00px;top:578.00px;width:1000.00px;height:14.00px;background:#f3f3f3;"></div>
<div style="position:absolute;top:583.03px;font-size:8px;line-height:1;white-space:nowrap;color:#555555;font-weight:normal;left:8.00px;transform:scaleX(0.7611);transform-origin:0 0;">Ready</div>
<svg style="position:absolute;left:0;top:578px" width="1000" height="14" viewBox="0 578 1000 14">
<rect x="39.3" y="583.3" width="8.4" height="7" fill="none" stroke="#555" stroke-width="1"/><rect x="39.3" y="583" width="8.4" height="1.6" fill="#555"/><circle cx="45" cy="588" r="1.5" fill="#333"/><line x1="41" y1="586" x2="43" y2="586" stroke="#777" stroke-width="0.8"/><line x1="41" y1="588.5" x2="43" y2="588.5" stroke="#777" stroke-width="0.8"/>
<path d="M60.3 584.2 Q64.3 582.6 68.3 584.2" stroke="#555" stroke-width="1.3" fill="none"/><path d="M62.5 585 L64.3 590.5 L66.1 585" stroke="#555" stroke-width="1" fill="none"/><path d="M65 588 L68.5 585.5" stroke="#555" stroke-width="0.9"/>
<rect x="808" y="578" width="24" height="14" fill="#e2e2e2"/>
<rect x="815.5" y="581.5" width="8.5" height="8.5" fill="none" stroke="#555" stroke-width="1"/><line x1="815.5" y1="584.3" x2="824" y2="584.3" stroke="#555" stroke-width="0.8"/><line x1="815.5" y1="587.1" x2="824" y2="587.1" stroke="#555" stroke-width="0.8"/><line x1="818.3" y1="581.5" x2="818.3" y2="590" stroke="#555" stroke-width="0.8"/><line x1="821.1" y1="581.5" x2="821.1" y2="590" stroke="#555" stroke-width="0.8"/>
<rect x="841.5" y="581.5" width="9" height="8.5" fill="none" stroke="#555" stroke-width="1"/><line x1="843.8" y1="581.5" x2="843.8" y2="590" stroke="#666" stroke-width="0.8"/><line x1="846" y1="581.5" x2="846" y2="590" stroke="#666" stroke-width="0.8"/><line x1="848.2" y1="581.5" x2="848.2" y2="590" stroke="#666" stroke-width="0.8"/><line x1="841.5" y1="583.5" x2="850.5" y2="583.5" stroke="#555" stroke-width="0.8"/>
<rect x="867.5" y="581.5" width="9" height="8.5" fill="none" stroke="#555" stroke-width="1"/><path d="M869.5 581.5 L869.5 586 L874.5 586 L874.5 581.5" fill="none" stroke="#555" stroke-width="1"/>
<line x1="888" y1="585.5" x2="891" y2="585.5" stroke="#666"/>
<line x1="893" y1="585.5" x2="963" y2="585.5" stroke="#9a9a9a" stroke-width="1"/>
<rect x="926.5" y="582" width="3" height="7" fill="#555"/>
<line x1="965" y1="585.5" x2="969" y2="585.5" stroke="#666"/><line x1="967" y1="583.5" x2="967" y2="587.5" stroke="#666"/>
</svg>
<div style="position:absolute;top:582.83px;font-size:8px;line-height:1;white-space:nowrap;color:#333333;font-weight:bold;left:72.00px;transform:scaleX(0.8201);transform-origin:0 0;">Accessibility: Investigate</div>
<div style="position:absolute;top:583.15px;font-size:7.5px;line-height:1;white-space:nowrap;color:#555555;font-weight:normal;left:979.50px;transform:scaleX(0.8658);transform-origin:0 0;">96%</div>
</body></html>
